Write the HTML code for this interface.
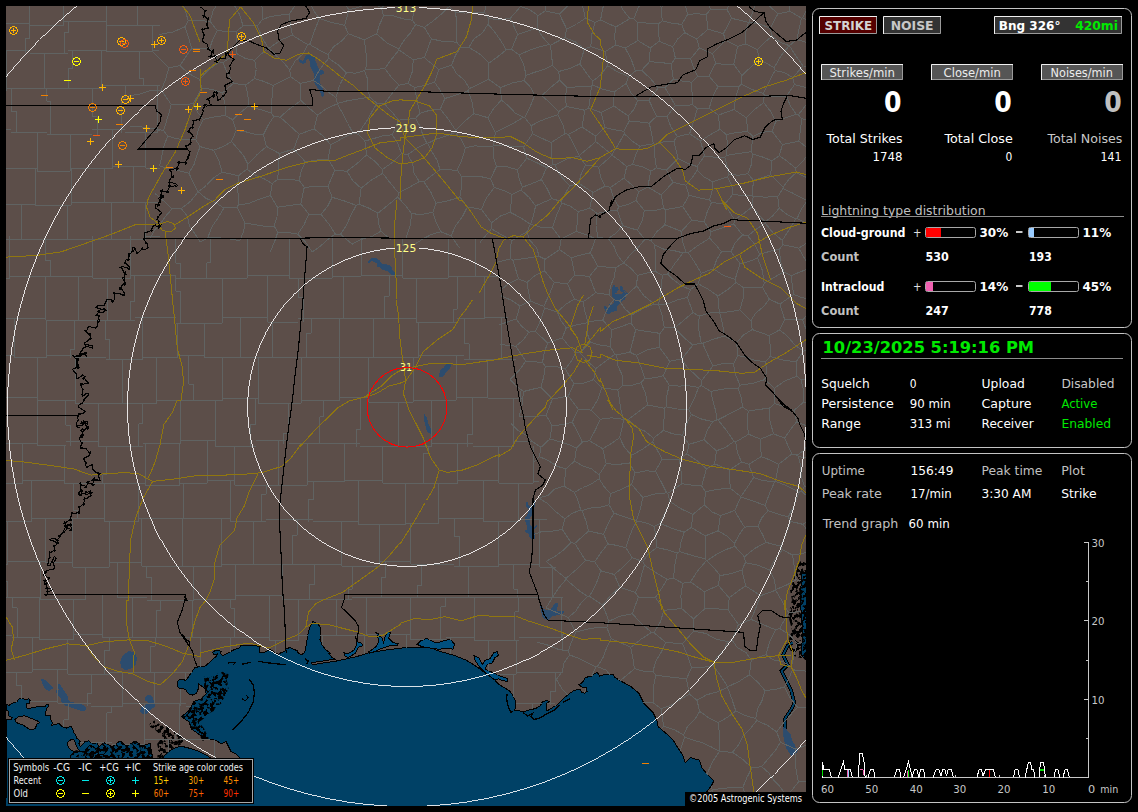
<!DOCTYPE html>
<html><head><meta charset="utf-8"><title>Lightning Detector</title>
<style>html,body{margin:0;padding:0;background:#000;overflow:hidden}svg{display:block}</style>
</head><body>
<svg width="1138" height="812" viewBox="0 0 1138 812">
<rect width="1138" height="812" fill="#000"/>
<!-- MAP -->
<svg x="6" y="6" width="800" height="800" viewBox="6 6 800 800" overflow="hidden" shape-rendering="crispEdges">
<defs><filter id="mf" x="0" y="0" width="100%" height="100%"><feTurbulence type="fractalNoise" baseFrequency="0.27" numOctaves="2" seed="5"/><feColorMatrix values="0 0 0 0 0 0 0 0 0 0 0 0 0 0 0 0 0 0 -18 9.4"/></filter><clipPath id="mc"><path d="M203.9 676.6L208.8 677.9L216.2 674.2L222.3 671.7L228.5 674.2L227.3 681.6L228.5 688.9L224.8 696.3L221.1 703.7L216.2 706.2L213.7 711.1L208.8 713.6L203.9 718.5L198.9 722.2L203.9 728.3L208.8 738.2L203.9 743.1L198.9 734.5L191.6 729.6L189.1 722.2L181.7 717.3L187.9 713.6L187.9 709.9L192.8 706.2L192.8 701.3L198.9 703.7L202.6 696.3L206.3 691.4L203.9 686.5L204.5 681.6Z M149.7 723.1L154.6 720.6L159.5 724.3L166.9 726.8L171.9 729.2L179.2 734.2L184.2 739.1L181.7 744L176.8 746.5L171.9 748.9L166.9 753.9L162 758.8L157.1 758.8L158.3 748.9L157.1 744L160.8 739.1L159.5 734.2L154.6 729.2L149.7 726.8Z M800 560L795 575L790 590L792 600L788 615L792 630L787 645L794 656L807 660L807 560Z M70 756L76 750L84 752L90 745L97 749L104 742L112 747L120 741L127 746L135 741L143 746L150 743L153 760L70 760Z"/></clipPath></defs>
<rect x="6" y="6" width="800" height="800" fill="#5c4e49"/>
<path d="M6.2 704.6L9.2 705.2L12.3 703.4L17.2 701.5L18.5 699.1L22.2 698.5L25.9 699.7L28.9 698.5L30.2 700.9L29.5 703.4L26.5 704L26.5 707.7L27.7 708.9L32 707.7L39.4 706.5L45.5 706.5L46.2 704L48.3 704.6L48.6 706.5L47.4 707.7L46.2 709.5L45.5 715.1L48.6 715.1L50.5 715.7L51.1 720.6L52.3 722.5L51.7 725.5L54.8 724.3L59.1 723.7L60.9 725.5L62.8 726.8L66.5 728L69.6 726.8L71.4 726.8L72.6 729.2L73.9 732.9L75.7 734.8L76.3 737.9L78.8 739.7L80 741.6L78.8 744L80.6 746.5L84.9 741.6L88.6 740.9L91.1 742.8L93.6 743.4L97.3 742.8L98.5 746.5L97.3 748.9L102.2 749.6L105.9 751.4L104.6 753.9L102.2 755.1L98.5 753.9L96 756.3L93.6 758.8L93.6 803.1L6.2 803.1Z M240.8 806.8L239.6 757.8L235.9 753.9L230.9 751.4L228.5 746.5L226 741.6L221.1 744L216.2 740.3L208.8 739.1L203.9 737.9L198.9 734.2L191.6 729.2L189.1 721.9L181.7 716.9L189.1 709.9L194 701.3L201.4 698.8L206.3 693.9L205.1 688.9L198.9 684L198.3 688.9L196.5 693.2L192.8 695.1L188.5 693.9L186 690.2L183.6 688.7L179.9 688.9L177.4 686.5L177 682.2L179.2 680L182.9 679.7L186 680.3L189.1 676L192.8 670.5L195.2 667.4L198.9 666.8L203.9 667L208.8 663.1L212.5 659.4L216.2 656.3L217.4 653.9L213.7 654.5L212.7 652.3L214.9 650.8L218 650.5L221.1 651.4L220.5 653.2L222.3 655.7L228.5 652.6L234.6 649.5L239.6 647.7L240.8 645.9L253.1 645.2L260 646.5L259.1 652.5L262.8 652.8L266.5 651.2L270.2 649.4L273.9 651.9L278.8 654.3L281.3 652.5L284.9 651.2L286.2 648.8L289.9 647.5L293.6 649.4L297.3 650.6L298.5 653.7L302.2 654.3L304.6 652.5L305.9 646.9L307.1 639.5L308.3 632.2L310.2 626L312.6 621.7L315.1 622.3L318.2 624.2L320 627.2L320.6 633.4L320 639.5L322.5 645.7L325.6 649.4L330 653.1L328.3 653.1L332 657.4L335.1 659.2L336.9 661L346.8 658.8L355.4 656.9L364 654.4L368.9 652.8L376.3 651.6L386.2 650L396 648.7L404.6 647.7L413.3 647.1L423.1 647.5L430 646.9L436.9 650.5L454.2 655.4L466.5 660.3L476.4 666.5L485 672.7L493.6 678.8L499.1 684.6L504.9 688L508.8 690.3L512.3 694.3L515.1 700L515.7 705.7L514.6 710.8L519.7 710.8L523.1 712L527.7 710.3L535.7 708.5L540.3 705.7L542.5 701.7L547.1 700.6L549.4 701.7L546.5 703.4L546 708L547.1 710.8L551.7 708L557.4 704.6L563.1 698.8L570 693.1L574.5 690.3L580.2 689.1L581.4 692L584.8 693.1L587.1 691.4L586.5 688L581.4 686.8L579.1 684.6L582.5 682.3L584.8 678.3L588.2 676.6L591.7 676L594 673.7L597.4 672.6L599.7 676L603.1 674.9L608.8 674.3L612.8 674.3L614.5 677.1L620 680.6L631 686.6L638.8 693.1L644 703.4L653 712.5L656.9 720.2L658.2 726.7L665.9 733.2L673.7 740.9L677.6 747.4L682.8 755.2L685.3 762.9L690.5 757.7L699.6 760.3L702.1 768.1L708.6 775.8L713.8 781L711.2 786.2L706 792.7L704.7 806.9Z M162 758.8L166.9 752.6L173.1 748.9L179.2 746.5L185.4 747.1L191.6 748.9L198.9 751.4L206.3 755.1L216.2 761.3L216.2 803.1L154.6 803.1Z M802 572L806 572L806 660L801 655L803 630L800 600Z M70 756L76 750L84 752L90 745L97 749L104 742L112 747L120 741L127 746L135 741L143 746L150 743L153 760L70 760Z" fill="#004166" stroke="#000" stroke-width="1"/>
<path d="M355.4 636.5L357.9 642L361.6 643.2L362.8 645.7L359.1 646.9L357.2 649.4L355.4 653.1L351.7 655.5L348.6 657.4L345.5 656.8L343.7 652.5L347.4 653.7L351.1 651.9L354.2 650L356 645.7L356.9 642.6Z M375.7 632.2L378.8 634L380 636.5L381.9 637.7L383.7 642.6L384.9 637.1L386.8 633.4L388.6 631.5L390.5 632.8L388.6 638.3L392.9 642.6L398.5 643.5L397.3 645.1L391.1 645.3L386.2 646.9L380 649.1L375.1 651.4L369.6 653.1L368.3 652.2L372.6 649.4L376.3 646.3L378.8 642L377.6 636.5Z M417.2 644.3L420.9 640.6L427.1 638.2L430.8 640.6L436.9 643.1L444.3 640.6L450.5 639.4L454.7 644.3L453 649.3L446.8 648L439.4 649.3L429.6 648L422.2 646.8Z M473.9 655.4L478.8 657.9L482.5 664.5L485 660.3L489.9 658.6L493.6 653L497.3 651.7L498.5 655.4L494.8 657.9L492.4 662.8L487.4 664.5L485 669L489.9 671.4L496.1 673.9L501 676.4L507.1 678.3L507.9 681.3L502.2 680.8L498.5 678.8L494.8 680L488.7 675.1L483.7 671.4L478.8 666L475.1 660.3Z" fill="#00507f" stroke="#000" stroke-width="1"/>
<path d="M14.8 719.4L18.5 716.9L24.6 715.7L30.8 718.2L36.9 720.6L39.4 722.5L36.9 724.3L35.1 728.6L30.8 729.9L26.5 727.4L22.8 724.9L18.5 723.7L16 721.9Z M4.9 709.5L8 710.8L8.6 715.7L12.3 717.5L11.1 719.4L4.9 720Z M67.1 742.8L71.4 739.1L73.9 739.7L75.7 744L77.6 748.9L80 750.8L76.3 752.6L71.4 750.2L68.3 747.1Z M311.7 662.9L318.5 661.6L324.6 660.8L335.1 659L336.9 661L324.6 662.8L312.3 664.7Z" fill="#5c4e49" stroke="#000" stroke-width="1"/>
<g clip-path="url(#mc)"><rect x="65" y="660" width="195" height="150" filter="url(#mf)"/><rect x="780" y="555" width="30" height="110" filter="url(#mf)"/></g>
<path d="M792.7 642.3L787.9 645.5L783.1 655.1L787.9 664.6L781.5 671L786.3 680.6L791.1 690.2L794.3 703L791.1 709.4L784.7 719L784.7 728.6" fill="none" stroke="#000" stroke-width="3.6"/><path d="M792.7 642.3L787.9 645.5L783.1 655.1L787.9 664.6L781.5 671L786.3 680.6L791.1 690.2L794.3 703L791.1 709.4L784.7 719L784.7 728.6" fill="none" stroke="#004166" stroke-width="1.8"/>
<path d="M42.5 680L45.5 681.2L49.2 684.9L51.7 688L49.2 689.8L45.5 688L43.7 684.3Z M59.1 684.9L61.6 688.6L64 692.3L66.5 696L66.5 700.3L70.2 702.8L76.3 704L81.3 705.2L84.9 707.7L84.3 710.2L80 709.5L75.1 707.7L70.2 705.9L65.2 704.6L62.2 700.9L61.6 697.2L57.9 693.5L57.2 691.1L60.3 691.7L59.1 687.4Z" fill="#2c4c6e" stroke="#2c4c6e" stroke-width="2.2" stroke-linejoin="round"/>
<path d="M122.7 656.2L128.1 651.7L134.7 652.5L136.9 657.9L135.5 663.5L131 668L125.6 670L121.4 667L120.7 661.6Z M144.8 697.6L148.5 695.1L152.2 696.9L152.8 700L154.6 702.5L154.6 706.2L150.9 709.3L147.2 712.9L143.5 714.2L140.5 711.1L141.7 707.4L146 704.9L149.1 701.9L145.4 700Z M299.1 59.4L300.3 60.7L302.9 61.1L304.7 58.5L305.9 55.9L308.5 55.1L311.6 56.8L314.6 57.7L315 60.7L316.7 65L318.9 70.2L321.9 70.2L323.6 71.9L323.2 73.6L319.7 74.5L319.3 77.9L319.7 83.1L321.9 87.4L323.2 90.9L323.6 95.2L322.3 96.9L320.6 91.7L317.6 87.4L315 83.1L314.1 77.9L314.6 74.5L312.4 70.2L310.7 66.7L310.3 61.6L308.5 58.1L306.4 59L305.5 62L302.9 63.7L300.3 62.4Z M367.9 261.8L369.4 260.3L371.3 259.1L373.3 258.1L375.3 258.1L377.7 259.4L379.7 261.1L381.2 263.3L382.7 264.3L386.6 265L389.6 266L391 267.2L391 269.2L393 271.2L395 272.7L396.5 275.6L396.7 276.8L395 276.8L393.5 275.6L391.5 274.1L389.6 272.7L387.6 270.7L385.6 270.2L383.2 269.2L381.2 268.7L380.7 267.2L377.2 266.3L377 265L378.2 264.3L376.3 262.8L374.3 261.6L372.3 260.6L370.6 261.1L369.4 262.8L368.1 262.8Z M440.6 370L444.3 367.5L446.8 363.8L450.5 365L449.3 368.7L445.6 372.4L443.1 376.1L439.4 376.8Z M612.2 288.5L613.7 285.2L614.8 285.9L615.1 287.7L617.3 287.4L618.5 289.6L616.6 290.7L616.2 292.5L614.8 292.9L614.4 294.4L619.6 294.8L622.5 294.4L623.6 292.2L620.3 290.7L620.3 286.6L621.8 286.3L622.5 290L625.5 292.9L627.7 293.3L625.8 295.9L624.7 298.5L622.5 299.9L621 301.8L618.8 304L616.6 306.2L616.2 308.4L616.6 310.3L614.4 311L612.2 311.4L610 313.2L607.4 313.6L606.3 311L604.4 308.1L604.4 306.2L606.3 307L607.7 308.4L609.6 307.7L609.2 304.4L611.4 305.5L614 303.6L614.4 301L615.5 299.2L612.5 297.3L612.2 293.7Z M526.1 502.2L527.6 502.7L528.1 505.6L530.5 507.6L532 504.6L532.5 501.2L534 501.2L534 506.6L532.5 509.6L531.5 513.5L529.6 517.4L529.1 522.4L530.5 526.3L533.5 527.3L536.5 525.3L536.9 526.3L534 529.3L532.5 531.2L535 533.7L534.5 538.1L532 539.1L529.6 537.1L529.1 533.7L525.1 531.2L527.6 529.8L527.1 525.3L525.6 520.4L525.1 517.4L526.6 516.9L528.1 512.5L529.6 509.6L526.6 506.6Z M424.1 413.5L426.6 417.2L427.6 423.4L430 428.3L432 429.6L430.8 434L427.6 431.5L425.9 425.9L424.6 419.7Z M540.4 602.5L544.1 609.9L550.2 611.1L555.2 603.7L557.6 603.7L556.4 611.1L563.8 611.1L562.6 614.3L552.7 615.3L547.8 619.7L542.9 617.2L541.6 611.1Z M784.9 728L790.1 734.5L793.9 744.8L796.5 752.6L791.4 755.2L786.2 747.4L784.1 737.1Z M783.5 727L787.9 735L794.3 744.5L797.5 750.9L791.1 754.8L786.3 746.1L783.5 735.6Z" fill="#2c4c6e" stroke="#2c4c6e" stroke-width="0.9"/>
<path d="M626.9 806.9L625.7 817.7M625.7 817.7L622.9 830.8M648.5 806.9L650.3 815.8M650.3 815.8L655.5 827M511.1 423.6L518 430.3M518 430.3L526.2 435.3M526.2 435.3L533 442.1M533 442.1L541 447.3M519.4 416.1L532.8 416.7M532.8 416.7L546.1 415.2M541 447.3L549.8 439M549.8 439L552.1 425.7M546.1 415.2L552.1 425.7M523.6 147L532.4 133.6M523.6 147L526.8 158.3M532.4 133.6L541.7 138.2M541.7 138.2L551.1 142.6M546.5 167.5L536.8 162.6M536.8 162.6L526.8 158.3M546.5 167.5L552.9 164.5M552.9 164.5L551.4 153.6M551.4 153.6L551.1 142.6M557.7 114.8L562.6 123.7M562.6 123.7L565.2 133.5M557.7 114.8L548.6 117.7M548.6 117.7L539.7 121.2M539.7 121.2L531.2 125.7M531.2 125.7L532.4 133.6M551.1 142.6L565.2 133.5M746.9 -3L730.4 1.3M730.4 1.3L724.2 -14.6M706.1 14.6L710.5 9.6M706.1 14.6L696.9 13.7M696.9 13.7L687.6 14.4M710.5 9.6L704.8 -5.3M687.6 14.4L685.2 4.3M685.2 4.3L694.7 -7.9M730.4 1.3L727.1 9.6M727.1 9.6L710.5 9.6M795.8 749.1L804.9 745.8M804.9 745.8L814.5 745.2M814.5 745.2L823.8 743.4M795.8 749.1L795.2 760.2M795.2 760.2L796.2 771.2M796.2 771.2L798.4 782.1M824.5 777.3L811.7 780.9M811.7 780.9L798.4 782.1M780.5 742.3L775 751M775 751L768.3 758.7M768.3 758.7L761.7 766.6M780.5 742.3L795.8 749.1M761.7 766.6L768.6 772.7M768.6 772.7L773.8 780.2M773.8 780.2L780.1 786.8M780.1 786.8L785.5 794.1M785.5 794.1L789.3 793.4M789.3 793.4L798.4 782.1M789.3 793.4L797.4 798.7M797.4 798.7L804 805.8M804 805.8L810.8 812.7M810.8 812.7L818.9 817.9M785.5 794.1L784.2 795.6M784.2 795.6L782.2 804.7M782.2 804.7L782.2 814.1M782.2 814.1L780.4 823.2M780.4 823.2L778.4 832.2M596.4 806.9L591.4 812.5M562.7 828.1L571.2 820.2M571.2 820.2L577.8 810.7M577.8 810.7L591.4 812.5M577.8 810.7L576.1 806.9M722.1 816.8L718.9 807.9M718.9 807.9L714.3 799.6M714.3 799.6L712.5 790.2M722.1 816.8L731.2 816.1M731.2 816.1L740 813.5M740 813.5L749 811.9M742.8 787.3L746.3 797M746.3 797L751.2 806.1M742.8 787.3L732.7 787.9M732.7 787.9L722.5 788.1M722.5 788.1L712.5 790.2M712.5 790.2L712.5 790.2M749 811.9L751.2 806.1M684.1 818.8L684.3 807.5M684.3 807.5L685.2 806.9M705.9 793.5L712.5 790.2M757.7 832.9L753.7 822.3M753.7 822.3L749 811.9M761.7 766.6L751.9 767.9M751.9 767.9L747 777.4M747 777.4L742.8 787.3M784.2 795.6L773.5 800.3M773.5 800.3L761.9 801.7M761.9 801.7L751.2 806.1M732.5 752.3L719.5 751.4M732.5 752.3L742.8 759.4M742.8 759.4L751.9 767.9M707.3 773.4L712.5 761.9M712.5 761.9L719.4 751.4M707.3 773.4L707.7 774.7M711.2 786.1L712.5 790.2M719.5 751.4L719.4 751.4M760.6 595.7L745.7 586M760.6 595.7L775.7 590.2M775.7 590.2L776 589.5M776 589.5L774.3 579.3M774.3 579.3L769.6 570M769.6 570L757.8 565.2M757.8 565.2L745.4 562.6M745.7 586L741.9 570M741.9 570L745.4 562.6M782.4 549.8L774.9 559.2M774.9 559.2L769.6 570M782.4 549.8L780.6 546.2M780.6 546.2L766.2 542.4M744.4 556.8L754.6 548.5M754.6 548.5L766.2 542.4M744.4 556.8L745.4 562.6M808 708L813.1 699M813.1 699L818.9 690.4M818.9 690.4L824.6 681.8M808 708L815.1 714.8M815.1 714.8L821 722.8M821 722.8L829 728.7M784.5 686.9L790.1 697.7M790.1 697.7L797.5 707.3M784.5 686.9L774.9 689.6M774.9 689.6L764.9 690.4M764.9 690.4L762.3 699.9M762.3 699.9L757.8 708.8M757.8 708.8L755.6 718.4M797.5 707.3L790.3 715.2M790.3 715.2L783.1 723.3M783.1 723.3L776.7 731.9M776.7 731.9L767.3 725.2M767.3 725.2L756.7 720.5M756.7 720.5L755.6 718.4M749.4 674.8L738.9 681.5M738.9 681.5L727.7 686.8M749.4 674.8L757.7 682.1M757.7 682.1L764.9 690.4M735.9 711.1L745.4 715.7M745.4 715.7L755.6 718.4M735.9 711.1L731.9 699.1M731.9 699.1L727.5 687.3M727.5 687.3L727.7 686.8M780.5 742.3L776.7 731.9M808 708L797.5 707.3M732.5 752.3L738.8 744.5M738.8 744.5L743.4 735.5M743.4 735.5L750.6 728.4M750.6 728.4L756.7 720.5M735.9 711.1L727.4 717.3M727.4 717.3L718.2 722.6M718.2 722.6L719.2 732.1M719.2 732.1L719.8 741.7M719.8 741.7L719.5 751.4M567.6 695L562.4 689.4M562.4 689.4L556.3 679.3M568.3 617.5L557.2 612.7M557.2 612.7L546 607.9M568.3 617.5L575.6 611.3M575.6 611.3L580.9 603.3M580.9 603.3L587.5 596.3M546 607.9L552.2 598M552.2 598L558.5 588.1M558.5 588.1L566.1 579.3M566.1 579.3L572.9 585.3M572.9 585.3L579.9 591.2M579.9 591.2L587.5 596.3M564.2 486.2L555.1 488.7M555.1 488.7L547.9 495.4M547.9 495.4L538.8 497.9M564.2 486.2L565.7 469M565.7 469L556.4 466M556.4 466L548.3 460.5M548.3 460.5L539.4 456.6M539.4 456.6L534.3 461.9M523.5 391.5L522.2 403.9M522.2 403.9L519.4 416.1M523.5 391.5L540.9 387.2M546.1 415.2L552.4 399M552.4 399L540.9 387.2M552.4 399L568.3 396M540.9 387.2L543.7 377M543.7 377L545.3 366.5M565.4 369.1L555.5 366.3M555.5 366.3L545.3 366.5M565.4 369.1L573.8 383.7M573.8 383.7L568.3 396M565.7 469L574.6 461.1M539.4 456.6L541 447.3M549.8 439L558.9 441.4M558.9 441.4L567.9 444.2M567.9 444.2L576.5 448.1M576.5 448.1L574.6 461.1M564.2 486.2L574.4 492.3M574.4 492.3L582.6 487.7M582.6 487.7L591.4 484M591.4 484L599.2 478.7M599.2 478.7L599 474.8M574.6 461.1L582.7 465.8M582.7 465.8L591.6 468.9M591.6 468.9L599 474.8M243.1 25.9L257.3 25.9M243.1 25.9L239.4 14.3M239.4 14.3L233.5 3.7M233.5 3.7L245.2 -7.3M262.2 19.6L257.3 25.9M262.2 19.6L262.5 8.7M262.5 8.7L259.7 -1.9M512 194.5L503.4 190.4M503.4 190.4L494.3 187.6M512 194.5L521.1 190M521.1 190L522.5 187.2M522.5 187.2L519.1 178.8M519.1 178.8L517.5 169.8M517.5 169.8L507.2 166.8M507.2 166.8L496.5 166.4M494.3 187.6L490.6 178.7M496.5 166.4L490.6 178.7M546.5 167.5L541.5 179.6M526.8 158.3L517.5 169.8M541.5 179.6L532 183.5M532 183.5L522.5 187.2M493 146.3L493.2 156.6M493.2 156.6L496.5 166.4M493 146.3L493.8 145.4M493.8 145.4L503.8 144.9M503.8 144.9L513.6 146.7M513.6 146.7L523.6 147M405.9 238.5L409.9 226.4M409.9 226.4L411.9 213.8M411.9 213.8L422.4 214.4M422.4 214.4L432.8 212.3M432.8 212.3L436 222.3M436 222.3L440.8 231.7M415.6 243.7L423.4 238.6M423.4 238.6L431.7 234.3M431.7 234.3L440.8 231.7M380.9 231.2L390.8 239.9M380.9 231.2L371.8 236.5M371.8 236.5L361.4 239.3M361.4 239.3L352.1 244.2M585.4 18.3L576.4 24.3M576.4 24.3L566.7 29.1M585.4 18.3L582.6 6.2M582.6 6.2L576.9 -4.8M559.4 14L568.5 5.1M568.5 5.1L575.5 -5.5M559.4 14L566.7 29.1M558.8 111.5L566.4 106.4M558.8 111.5L550.5 103.3M550.5 103.3L541.8 95.7M541.8 95.7L550.5 87.6M550.5 87.6L559.7 80.1M559.7 80.1L567.1 87.8M567.1 87.8L565.2 97.1M565.2 97.1L566.4 106.4M584.4 49L579.9 63.9M584.4 49L590.8 46.7M590.8 46.7L605.4 51.5M579.9 63.9L586.2 72.7M586.2 72.7L592.7 81.2M592.7 81.2L601.2 74.5M601.2 74.5L607.5 65.7M605.4 51.5L607.5 65.7M564.9 37.6L575.4 42M575.4 42L584.4 49M564.9 37.6L566.7 29.1M585.4 18.3L595 22.3M595 22.3L591.8 34.3M591.8 34.3L590.8 46.7M558.7 71.5L569.6 68.5M569.6 68.5L579.9 63.9M558.7 71.5L559.7 80.1M591.4 86.1L579.2 86.6M579.2 86.6L567.1 87.8M591.4 86.1L592.5 84.8M592.5 84.8L592.7 81.2M615.6 45L605.4 51.5M615.6 45L625.2 48.1M635.3 71.1L631.2 59.2M631.2 59.2L625.2 48.1M635.3 71.1L628.5 76.6M628.5 76.6L617.6 71.8M617.6 71.8L607.5 65.7M578.1 211.7L577.4 221.6M577.4 221.6L576.2 231.4M578.1 211.7L589.9 208.1M589.9 208.1L596.9 213.4M596.9 213.4L596 225.5M596 225.5L597.9 237.5M576.2 231.4L586 234.6M586 234.6L595.5 238.8M595.5 238.8L597.9 237.5M746.9 -3L755 5.5M755 5.5L749 22M731.5 18.3L727.1 9.6M731.5 18.3L748.4 22.3M748.4 22.3L749 22M671 -1.5L685.2 4.3M671 -1.5L661.7 7.3M687.6 14.4L681.8 24.4M681.8 24.4L671.8 23.2M671.8 23.2L662.1 20.8M661.7 7.3L662.1 20.8M715.7 63.1L712.4 53.6M715.7 63.1L724.7 64.6M724.7 64.6L733.7 64.2M733.7 64.2L735.8 55.4M735.8 55.4L737.6 46.4M737.6 46.4L725.4 40M712.4 53.6L719.1 47M719.1 47L725.4 40M731.5 18.3L723.4 33.6M706.1 14.6L708.1 29.3M708.1 29.3L723.4 33.6M737.6 46.4L745.4 43.9M748.4 22.3L745.5 32.9M745.5 32.9L745.4 43.9M725.4 40L723.4 33.6M380.9 231.2L378.1 222.4M378.1 222.4L377.9 213.2M411.9 213.8L405.1 205.1M405.1 205.1L397.7 197M377.9 213.2L387.9 205.2M387.9 205.2L397.7 197M729.2 597.9L718.3 585.3M729.2 597.9L737.2 591.6M737.2 591.6L745.7 586M741.9 570L731.2 573.7M731.2 573.7L720.1 575.6M720.1 575.6L718.3 585.3M751.2 619.4L738.4 624.5M751.2 619.4L756 607.6M756 607.6L760.6 595.7M729.2 597.9L728.1 610M738.4 624.5L728.1 610M704.3 591.8L718.3 585.3M704.3 591.8L704.5 609M728.1 610L716.3 608.7M716.3 608.7L704.5 609M682.7 583.3L690.5 581.9M682.7 583.3L680.9 595.8M680.9 595.8L681.6 608.5M681.6 608.5L693.5 618.8M690.5 581.9L704.3 591.8M693.5 618.8L704.5 609M682.7 583.3L673.5 578.1M681.6 608.5L663.9 610.3M663.9 610.3L655.5 597.4M655.5 597.4L661.5 588.5M661.5 588.5L667.2 579.4M673.5 578.1L667.2 579.4M679.3 551.6L681.1 541.7M681.1 541.7L684.1 532.2M679.3 551.6L677.3 552.9M654.3 526.5L655.9 537M655.9 537L656.7 547.5M654.3 526.5L660.1 523.4M677.3 552.9L667.1 549.8M667.1 549.8L656.7 547.5M660.1 523.4L671.9 528.2M671.9 528.2L684.1 532.2M744.4 556.8L734.9 546.5M720.1 575.6L714 567.8M714 567.8L707 560.8M734.9 546.5L724.9 549.9M724.9 549.9L715.7 554.9M715.7 554.9L707 560.8M679.3 551.6L692.2 555.4M692.2 555.4L705.2 559M691.3 527.4L684.1 532.2M691.3 527.4L705.3 535.9M705.3 535.9L705.5 547.4M705.5 547.4L705.2 559M690.5 581.9L697.7 570.7M697.7 570.7L706.4 560.6M677.3 552.9L674.8 565.4M674.8 565.4L673.5 578.1M705.2 559L706.4 560.6M706.4 560.6L707 560.8M815.6 541.3L809.1 533M809.1 533L803.1 524.4M822.5 510.1L812.4 516.8M812.4 516.8L803.1 524.4M780.6 546.2L786.1 534M786.1 534L790.6 521.3M766.2 542.4L762.3 534.1M762.3 534.1L757.9 526M757.9 526L761.9 517.7M761.9 517.7L768 510.7M768 510.7L778 514.1M778 514.1L788.2 517M790.6 521.3L788.2 517M765.2 505.4L769.5 493.3M769.5 493.3L774.8 481.6M765.2 505.4L753.1 501.1M753.1 501.1L740.9 496.9M740.9 496.9L740.8 496.6M740.8 496.6L747.4 487.2M747.4 487.2L753.6 477.7M753.6 477.7L764 480.8M764 480.8L774.8 481.6M768 510.7L765.2 505.4M788.2 517L794.4 505M794.4 505L798.9 492.3M798.9 492.3L787.4 486M787.4 486L775.3 481.3M775.3 481.3L774.8 481.6M748.8 464.4L753.6 477.7M748.8 464.4L761.2 456.6M761.2 456.6L770.2 460M770.2 460L778.8 464.2M775.3 481.3L778.8 464.2M584.3 692.9L584.8 691.9M584.8 691.9L586.1 687.9M591.9 675.8L592.2 675.2M592.2 675.2L596 667M556.3 679.3L562.1 671.9M562.1 671.9L564.2 662.5M564.2 662.5L569.7 654.9M596 667L587.4 662.6M587.4 662.6L578.7 658.4M578.7 658.4L569.7 654.9M568.3 617.5L575.7 632.1M536.7 642.2L547.3 644.9M547.3 644.9L557.5 649M557.5 649L568.3 651M575.7 632.1L571.7 641.4M571.7 641.4L568.3 651M684.3 807.5L683.8 806.9M707.3 773.4L706.4 773.2M684.5 737.1L693.5 740.1M693.5 740.1L702.5 742.9M702.5 742.9L711.1 746.8M711.1 746.8L719.4 751.4M684.5 737.1L680.6 749M680.6 749L680 751M661.1 708.8L663.7 726.2M661.1 708.8L671.2 705.2M671.2 705.2L680.3 699.5M680.3 699.5L689.5 694.2M663.7 726.2L674 729.6M674 729.6L683.5 734.8M683.5 734.8L687.7 726.2M687.7 726.2L694.7 719.5M694.7 719.5L699.7 711.4M699.7 711.4L697 700.3M697 700.3L689.5 694.2M653.1 702.7L661.1 708.8M653.1 702.7L644 702.1M644 702.1L643.4 702.2M661 729L663.7 726.2M655.8 675.1L666 676.6M666 676.6L676.2 677.7M676.2 677.7L686.4 679M655.8 675.1L654 684.3M654 684.3L653.8 693.5M653.8 693.5L653.1 702.7M686.4 679L689.5 694.2M684.5 737.1L683.5 734.8M718.2 722.6L708.5 717.6M708.5 717.6L699.7 711.4M727.5 687.3L717.4 691.8M717.4 691.8L706.7 694.8M706.7 694.8L697 700.3M796.1 579.7L801.3 581.2M806 582.5L810.7 583.8M796.1 579.7L794.4 567.4M794.4 567.4L792.6 555.1M792.6 555.1L803.7 553.1M803.7 553.1L814.6 550.4M813.9 580.5L810.7 583.8M782.4 549.8L792.6 555.1M776 589.5L786.3 585.2M786.3 585.2L796.1 579.7M803.1 524.4L790.6 521.3M812.2 591L810.7 583.8M566.1 579.3L566 578.3M546.4 561.2L555.8 570.3M555.8 570.3L566 578.3M663.9 610.3L660.3 622.1M660.3 622.1L653.9 632.6M655.5 597.4L638.3 597M653.9 632.6L651.5 632.4M651.5 632.4L641.4 623.7M641.4 623.7L632.4 613.8M638.3 597L632.4 613.8M569.7 654.9L568.3 651M823.7 52.5L817.7 60.1M817.7 60.1L810.2 66.2M810.2 66.2L817.3 76.6M817.3 76.6L821.9 88.3M763.5 93.4L752.3 89.6M752.3 89.6L741.8 84.2M763.5 93.4L764.2 94.8M739.2 86L741.8 84.2M739.2 86L735.7 97.5M735.7 97.5L734 109.5M734 109.5L746.2 117.7M746.2 117.7L754.4 109.6M754.4 109.6L763.7 102.6M764.2 94.8L763.7 102.6M636.6 520.6L625.2 517.1M625.2 517.1L613.9 513.1M636.6 520.6L640.4 509.1M640.4 509.1L642.8 497.4M610.5 493.7L608.9 504.7M610.5 493.7L621.2 489.5M621.2 489.5L631.6 484.5M631.6 484.5L642.8 497.4M613.9 513.1L608.9 504.7M636.9 521L632.3 529.5M632.3 529.5L628.8 538.5M628.8 538.5L625.9 547.7M636.9 521L636.6 520.6M625.9 547.7L616.9 545.4M616.9 545.4L607.9 543.9M607.9 543.9L603.6 534.3M613.9 513.1L608.2 523.4M608.2 523.4L603.6 534.3M572.2 422.1L578.4 409.4M572.2 422.1L577.6 432M577.6 432L582.3 442.1M578.4 409.4L591.4 410.1M582.3 442.1L589.5 440.8M589.5 440.8L595.2 430.2M595.2 430.2L600.3 419.2M600.3 419.2L591.4 410.1M552.1 425.7L562.3 424.7M562.3 424.7L572.2 422.1M568.3 396L578.4 409.4M576.5 448.1L582.3 442.1M601.6 387.8L593.7 379.6M601.6 387.8L597.8 399.6M597.8 399.6L591.4 410.1M593.7 379.6L584 383M584 383L573.8 383.7M602.8 448.8L589.5 440.8M602.8 448.8L606.2 463.8M599 474.8L606.2 463.8M704.1 439.8L707.3 430.2M707.3 430.2L712.7 421.7M704.1 439.8L689 444.4M682.6 435.3L689 444.4M682.6 435.3L686.4 424.7M686.4 424.7L691.3 414.5M691.3 414.5L701.7 419.1M701.7 419.1L712.7 421.7M640.9 382.6L645.6 393.4M645.6 393.4L647.5 405M640.9 382.6L632 385.4M632 385.4L622.7 385.4M617.9 390L622.7 385.4M617.9 390L619.4 399.9M619.4 399.9L620.9 409.7M620.9 409.7L623.5 419.4M647.5 405L637.8 412.4M637.8 412.4L627.9 419.6M627.9 419.6L623.7 419.5M623.5 419.4L623.7 419.5M601.6 387.8L617.9 390M600.3 419.2L611.9 417.8M611.9 417.8L623.5 419.4M664.4 408.2L647.5 405M664.4 408.2L664 419.3M664 419.3L663.4 430.4M653.4 438.3L663.4 430.4M653.4 438.3L645.4 431.4M645.4 431.4L635.6 426.9M635.6 426.9L627.9 419.6M619.7 437.6L621.9 428.6M621.9 428.6L623.7 419.5M619.7 437.6L611.4 443.4M611.4 443.4L602.8 448.8M669.2 385.2L666.8 395.9M666.8 395.9L666 406.8M669.2 385.2L678.9 386.1M678.9 386.1L688.8 385.7M688.8 385.7L698.5 387.5M666 406.8L677.2 409M677.2 409L688.7 409.5M698.5 387.5L694.3 398.8M694.3 398.8L688.7 409.5M664.4 408.2L666 406.8M644.9 378.3L654.3 377.9M654.3 377.9L663.3 375.6M644.9 378.3L640.9 382.6M663.3 375.6L669.2 385.2M663.4 430.4L672.7 433.8M672.7 433.8L682.6 435.3M691.3 414.5L688.7 409.5M376.9 103.3L372.3 111M372.3 111L368 119M368 119L362.9 126.5M362.9 126.5L358.1 134.2M376.9 103.3L369.9 97.2M358.1 134.2L353.1 133.2M337.4 103.4L348.1 100.6M348.1 100.6L359 98.8M359 98.8L369.9 97.2M337.4 103.4L337.2 103.8M353.1 133.2L347.7 123.4M347.7 123.4L342.8 113.5M342.8 113.5L337.2 103.8M262.2 19.6L270.9 16.4M270.9 16.4L279.9 15.1M279.9 15.1L289 14.4M289 14.4L296 3.9M281.1 -15.3L287.8 -5.1M287.8 -5.1L296 3.9M292.4 35.1L300 40M300 40L307.7 44.6M292.4 35.1L280.1 40.4M280.1 40.4L269.2 48.2M307.7 44.6L302.9 54M302.9 54L295 61.2M295 61.2L289.8 70.2M289.8 70.2L283.6 62.3M283.6 62.3L276.1 55.5M276.1 55.5L269.2 48.2M243.1 25.9L236.1 31.6M257.3 25.9L262 37.4M262 37.4L268.4 48M236.1 31.6L237.1 42.5M237.1 42.5L236.5 53.5M236.5 53.5L245.1 58.4M245.1 58.4L254.8 60.4M254.8 60.4L261.4 53.9M261.4 53.9L268.4 48M289 14.4L290.4 24.8M290.4 24.8L292.4 35.1M269.2 48.2L268.4 48M535.6 205.8L552 198.7M535.6 205.8L533.6 215.1M533.6 215.1L530.5 224.2M530.5 224.2L541.2 227.3M541.2 227.3L552.4 227.6M552.4 227.6L556.7 215.1M556.7 215.1L561.8 203M552 198.7L561 201.3M561 201.3L561.8 203M541.5 179.6L547.2 188.9M547.2 188.9L552 198.7M521.1 190L529 197.2M529 197.2L535.6 205.8M561.1 239.1L552.4 227.6M561.1 239.1L576.2 231.4M578.1 211.7L570.5 206.3M570.5 206.3L561.8 203M552.9 164.5L554.8 165M569.7 185.9L561 176.3M561 176.3L554.8 165M569.7 185.9L561 201.3M589.5 276.4L574.8 275M589.5 276.4L597.8 266.2M590.5 252.8L597.8 266.2M590.5 252.8L580.8 255M580.8 255L571.3 257.8M574.8 275L571.3 257.8M590.5 252.8L595.5 238.8M561.1 239.1L559.5 249.6M571.3 257.8L559.5 249.6M467.4 206.9L459.8 197.1M467.4 206.9L462.3 216.8M462.3 216.8L455.5 225.7M455.5 225.7L451.1 235.9M432.8 212.3L436 203.2M451.1 235.9L440.8 231.7M436 203.2L448.1 200.8M448.1 200.8L459.8 197.1M481.4 209.4L486.5 197.7M486.5 197.7L494.3 187.6M481.4 209.4L467.4 206.9M490.6 178.7L481.1 176.7M481.1 176.7L471.4 176.5M471.4 176.5L461.7 176.9M459.8 197.1L461.6 187.1M461.6 187.1L461.7 176.9M465.5 147.8L474.6 145.8M474.6 145.8L483.8 146.6M483.8 146.6L493 146.3M465.5 147.8L462.1 159.2M462.1 159.2L457.2 170.1M457.2 170.1L461.7 176.9M451.1 235.9L459.3 247.7M515.8 346.2L525.7 361.2M515.8 346.2L500 344.4M525.7 361.2L518.7 371M518.7 371L510 379.4M523.5 391.5L516.2 386M516.2 386L510 379.4M545.3 366.5L542.5 362.4M542.5 362.4L525.7 361.2M591.4 86.1L590.3 97M590.3 97L588.8 107.8M566.4 106.4L575.6 108.3M575.6 108.3L584.8 110.3M584.8 110.3L588.8 107.8M628.5 76.6L626.4 83.4M592.5 84.8L603 89.4M603 89.4L614.1 91.9M614.1 91.9L626.4 83.4M648.8 100L658.1 88M648.8 100L637.6 100.5M658.1 88L650.5 78.5M650.5 78.5L641.6 70.3M641.6 70.3L635.3 71.1M626.4 83.4L630.8 92.7M630.8 92.7L637.6 100.5M569.7 185.9L578.8 183.3M589.9 208.1L593 192.4M593 192.4L578.8 183.3M512 194.5L510.2 212.3M530.5 224.2L530.4 224.3M530.4 224.3L520.6 217.7M520.6 217.7L510.2 212.3M481.4 209.4L491.5 222.7M510.2 212.3L500.1 216.2M500.1 216.2L491.5 222.7M479.9 242.6L491.3 228.8M491.5 222.7L491.3 228.8M617.4 210.1L607.1 211.4M607.1 211.4L596.9 213.4M617.4 210.1L618.7 206.8M605.2 186.1L593 192.4M605.2 186.1L610.4 187.4M610.4 187.4L613.5 197.6M613.5 197.6L618.7 206.8M704.5 155.9L700.6 141.1M704.5 155.9L714.6 157.2M714.6 157.2L724.8 157.2M700.6 141.1L710 134.8M710 134.8L719.9 129.2M726.1 155.6L724.8 157.2M726.1 155.6L727.5 145.2M727.5 145.2L726.5 134.7M726.5 134.7L719.9 129.2M697.1 166.5L704.5 155.9M697.1 166.5L697.3 170.2M697.3 170.2L704.2 177M704.2 177L712.6 181.8M712.6 181.8L727.5 176.9M727.5 176.9L728.9 174.5M728.9 174.5L724.8 157.2M751.1 151.8L752.4 154M751.1 151.8L738.6 153.4M738.6 153.4L726.1 155.6M752.4 154L751.5 164.2M751.5 164.2L747.9 173.7M728.9 174.5L738.4 175.2M738.4 175.2L747.9 173.7M752.9 136.4L751.1 151.8M752.9 136.4L748 131.8M748 131.8L737.1 132.2M737.1 132.2L726.5 134.7M748 131.8L746.2 117.7M718.4 115.1L719.9 129.2M718.4 115.1L734 109.5M655 144.6L664.2 141.7M664.2 141.7L673.9 141M655 144.6L654.7 156.3M654.7 156.3L656.4 167.9M673.9 141L675.9 149.8M675.9 149.8L678.1 158.6M678.1 158.6L666.4 170.2M666.4 170.2L656.4 167.9M653.3 143.7L639.9 146.2M653.3 143.7L655 144.6M632.4 164.4L635.6 155.1M635.6 155.1L639.9 146.2M632.4 164.4L642 166.6M642 166.6L650.8 171.1M650.8 171.1L656.4 167.9M790.6 -13L788.9 -0.8M788.9 -0.8L790 11.4M790 11.4L777.8 14M777.8 14L766.7 3.1M766.7 3.1L770.2 -10.5M755 5.5L766.7 3.1M749 22L759.9 24M759.9 24L770.1 28.5M770.1 28.5L777.8 14M774.3 67.6L780.8 56M780.8 56L789.3 45.7M774.3 67.6L759.5 59.5M759.5 59.5L757.2 49.6M757.2 49.6L764.3 42.5M764.3 42.5L772.2 36.2M789.3 45.7L780 42.2M780 42.2L772.2 36.2M775.1 70.5L774.3 67.6M775.1 70.5L784.5 72.6M784.5 72.6L792.7 77.5M789.3 45.7L796 56M796 56L803.1 66M789.3 45.7L789.3 45.7M792.7 77.5L803.1 66M741.9 75.4L750.6 67.3M750.6 67.3L759.5 59.5M741.9 75.4L741.8 84.2M763.5 93.4L769 81.8M769 81.8L775.1 70.5M741.9 75.4L733.7 64.2M745.4 43.9L757.2 49.6M770.1 28.5L772.2 36.2M658.1 88L664.9 87.7M641.6 70.3L649.5 61.7M664.9 87.7L673.3 79.1M673.3 79.1L671.2 64M671.2 64L660.4 62.4M660.4 62.4L649.5 61.7M637.9 40.5L650.2 48.1M637.9 40.5L637.9 22.7M637.9 22.7L648.3 23.1M648.3 23.1L658.7 23.8M658.7 23.8L659.1 41.3M659.1 41.3L650.2 48.1M625.2 48.1L637.9 40.5M649.5 61.7L650.2 48.1M661.7 7.3L654.1 1.2M654.1 1.2L645.1 -2.5M637.9 22.7L633.8 18.9M658.7 23.8L662.1 20.8M633.8 18.9L638.2 7.6M638.2 7.6L645.1 -2.5M697.1 166.5L687.3 163.3M687.3 163.3L678.1 158.6M700.6 141.1L689.6 133.8M673.9 141L677.4 136.5M689.6 133.8L677.4 136.5M656.6 116.2L666.9 116.5M656.6 116.2L649.3 123.2M649.3 123.2L651.5 133.4M651.5 133.4L653.3 143.7M677.4 136.5L671 127.1M671 127.1L666.9 116.5M648.8 100L656.6 116.2M664.9 87.7L670.4 96.5M670.4 96.5L675.2 105.6M666.9 116.5L675.2 105.6M697.6 76.7L691.6 82.3M697.6 76.7L709 76M691.6 82.3L692.1 93.6M692.1 93.6L692.9 104.9M709 76L718 86.6M718 86.6L712.5 97M712.5 97L709.2 108.3M709.2 108.3L697.4 108.6M697.4 108.6L692.9 104.9M673.3 79.1L682.4 81M682.4 81L691.6 82.3M675.2 105.6L692.9 104.9M715.7 63.1L709 76M739.2 86L728.7 86.9M728.7 86.9L718 86.6M718.4 115.1L709.2 108.3M689.6 133.8L693.7 121.3M693.7 121.3L697.4 108.6M377.9 213.2L368.8 208.1M368.8 208.1L359.1 204.3M359.1 204.3L361.1 188.2M397.7 197L398.6 193M361.1 188.2L371.4 180M371.4 180L382.7 173.3M398.6 193L390.5 183.3M390.5 183.3L382.7 173.3M352.1 244.2L340.5 234.2M359.1 204.3L356.2 205.4M356.2 205.4L351 215M351 215L346.6 225.1M346.6 225.1L340.5 234.2M682.4 643.6L693.8 631.1M682.4 643.6L687.5 655.4M687.5 655.4L691.6 667.5M693.8 631.1L705.5 633.4M705.5 633.4L716.2 639.1M716.2 639.1L727.9 641.6M691.6 667.5L702.5 667.5M702.5 667.5L713.2 665.3M713.2 665.3L717 656.8M717 656.8L723.9 650.1M723.9 650.1L727.9 641.6M693.5 618.8L693.8 631.1M665.8 642.6L653.9 632.6M665.8 642.6L682.4 643.6M655.8 675.1L652.9 671.4M686.4 679L691.6 667.5M652.9 671.4L655.8 661.2M655.8 661.2L661.2 652.1M661.2 652.1L665.8 642.6M738.4 624.5L732.1 640.2M732.1 640.2L727.9 641.6M727.7 686.8L720.7 675.9M720.7 675.9L713.2 665.3M751.3 660L749.4 674.8M751.3 660L745.9 652.4M745.9 652.4L737.5 647.8M737.5 647.8L732.1 640.2M660.1 523.4L665.2 512.5M665.2 512.5L670 501.5M691.3 527.4L692.9 514.4M692.9 514.4L681 508.8M681 508.8L670 501.5M636.9 521L645.9 522.8M645.9 522.8L654.3 526.5M642.8 497.4L654.6 494M654.6 494L666.7 492.8M666.7 492.8L667.9 493.3M667.9 493.3L670 501.5M744.5 527.1L738.9 535M738.9 535L734.5 543.6M744.5 527.1L739.3 518.9M739.3 518.9L734.7 510.5M734.5 543.6L727.1 536.2M727.1 536.2L718.1 530.8M718.1 530.8L720.4 515.7M720.4 515.7L734.7 510.5M757.9 526L744.5 527.1M734.9 546.5L734.5 543.6M740.9 496.9L734.7 510.5M705.3 535.9L718.1 530.8M704.4 504.8L692.9 514.4M704.4 504.8L711.5 511.6M711.5 511.6L720.4 515.7M798.9 492.3L801.5 491.1M822.2 508.1L811.3 500.2M811.3 500.2L801.5 491.1M817 429.7L806.7 426M806.7 426L796.6 421.6M796.6 421.6L790.4 429.8M790.4 429.8L784.5 438.1M784.5 438.1L791.9 453.9M791.9 453.9L797.3 455.2M797.3 455.2L805.2 449.1M805.2 449.1L809.8 440M809.8 440L817.3 433.5M597.2 666.7L602.9 657.9M602.9 657.9L606.5 648.1M606.5 648.1L611.2 638.8M597.2 666.7L605.8 669.9M605.8 669.9L609.8 674.3M617.4 678.9L620.8 680.2M620.8 680.2L634.5 668.7M634.5 668.7L632.8 658.1M632.8 658.1L630.7 647.4M630.7 647.4L621 642.8M621 642.8L611.2 638.8M596 667L597.2 666.7M606.8 627.3L611.2 638.8M606.8 627.3L596.3 627.7M596.3 627.7L585.9 629.4M585.9 629.4L575.7 632.1M620.8 681L620.8 680.2M652.9 671.4L643.5 671.1M643.5 671.1L634.5 668.7M651.5 632.4L640.7 639.4M640.7 639.4L630.7 647.4M606.8 627.3L609 621.1M609 621.1L620.3 616.1M620.3 616.1L632.4 613.8M751.2 619.4L763.3 624.7M763.3 624.7L775.6 629.8M751.3 660L765.9 654.6M765.9 654.6L769.7 641.8M769.7 641.8L775.6 629.8M784.5 686.9L788.8 678.5M788.8 678.5L792.5 669.8M818.7 672.1L805.6 671.1M805.6 671.1L792.5 669.8M765.9 654.6L773.7 660.2M773.7 660.2L783.5 661.7M783.5 661.7L791.3 667.2M792.5 669.8L791.3 667.2M587.5 596.3L589.4 596.3M566 578.3L576.1 569.8M576.1 569.8L585.5 560.3M585.5 560.3L594.7 561.8M594.7 561.8L600.8 570.8M589.4 596.3L594 588.1M594 588.1L597.8 579.7M597.8 579.7L600.8 570.8M609 621.1L602.7 605.1M589.4 596.3L602.7 605.1M792.7 77.5L794.5 84.6M810.2 66.2L803.1 66M812.8 92.2L804.2 87.1M804.2 87.1L794.5 84.6M764.2 94.8L775.3 96.7M775.3 96.7L786.6 96M794.5 84.6L786.6 96M801.8 118.7L800.5 130M800.5 130L798.9 141.2M801.8 118.7L798.3 114.9M798.3 114.9L796.5 114.4M796.5 114.4L785.9 117.5M785.9 117.5L775.7 121.7M798.9 141.2L782.3 144.5M782.3 144.5L772 131.3M772 131.3L775.7 121.7M810.3 150.3L819.3 142.5M819.3 142.5L829.9 137.1M810.3 150.3L798.9 141.2M822.7 121.6L812.2 120.8M812.2 120.8L801.8 118.7M812.8 92.2L806.6 104.2M806.6 104.2L798.3 114.9M786.6 96L790.3 105.9M790.3 105.9L796.5 114.4M763.7 102.6L770.7 111.5M770.7 111.5L775.7 121.7M810.3 150.3L810.3 150.3M810.3 150.3L803.9 160M803.9 160L795.7 168.1M795.7 168.1L787.7 161.7M787.7 161.7L779.4 155.7M779.4 155.7L782.3 144.5M752.9 136.4L762.1 132.3M762.1 132.3L772 131.3M752.4 154L762.3 156.9M762.3 156.9L771.8 160.8M779.4 155.7L771.8 160.8M712.6 181.8L712.1 191M712.1 191L709.5 199.9M709.5 199.9L711.4 202.6M727.5 176.9L731.7 185M731.7 185L733 194.1M733 194.1L725 203.9M711.4 202.6L725 203.9M810.3 150.3L817.3 159.9M817.3 159.9L823.3 170.2M818.2 232.8L809.3 241.5M809.3 241.5L798.7 248.1M798.7 248.1L804.4 258.3M804.4 258.3L811.1 267.8M815 269L811.1 267.8M782.3 240.4L782.8 244.7M782.3 240.4L789.2 229.7M789.2 229.7L795.9 218.8M782.8 244.7L798.7 248.1M795.9 218.8L797.2 218.4M797.2 218.4L808.2 224.8M808.2 224.8L818.2 232.8M580.7 509.9L582.1 510.5M580.7 509.9L572.2 513.3M572.2 513.3L564.9 518.8M582.1 510.5L585.8 520.6M585.8 520.6L588.5 531.1M564.9 518.8L562.3 529.3M562.3 529.3L571.1 542.5M588.5 531.1L581.6 537.3M581.6 537.3L574.8 543.4M571.1 542.5L574.8 543.4M574.4 492.3L578.1 500.9M578.1 500.9L580.7 509.9M599.2 478.7L604.1 486.7M604.1 486.7L610.5 493.7M608.9 504.7L600.1 507.4M600.1 507.4L590.9 508M590.9 508L582.1 510.5M538.8 497.9L548.2 504M548.2 504L556.1 512M556.1 512L564.9 518.8M603.6 534.3L588.5 531.1M533.9 534.3L543.1 531.1M543.1 531.1L552.9 531.1M552.9 531.1L562.3 529.3M546.4 561.2L555.4 556M555.4 556L563.7 549.8M563.7 549.8L571.1 542.5M585.5 560.3L580.1 551.9M580.1 551.9L574.8 543.4M607.9 543.9L601 552.6M601 552.6L594.7 561.8M662.1 459.1L657.5 450.5M657.5 450.5L652.9 441.9M662.1 459.1L655.4 471.2M652.9 441.9L642.6 449.1M642.6 449.1L631.7 455.4M655.4 471.2L645.1 470.9M645.1 470.9L635 473M635 473L629.7 463.3M629.7 463.3L631.7 455.4M653.4 438.3L652.9 441.9M679.4 459.8L686.8 453.8M679.4 459.8L662.1 459.1M689 444.4L686.8 453.8M666.7 492.8L661.2 481.9M661.2 481.9L655.4 471.2M679.4 459.8L681.1 471.7M681.1 471.7L682 483.7M682 483.7L667.9 493.3M619.7 437.6L624.4 447.4M624.4 447.4L631.7 455.4M631.6 484.5L635 473M606.2 463.8L618 464.3M618 464.3L629.7 463.3M706.4 468.8L701.7 486M706.4 468.8L714.7 463.9M714.7 463.9L729.6 470M705.5 491.7L701.7 486M705.5 491.7L717.9 489.2M717.9 489.2L730.5 488.4M730.5 488.4L729.5 479.2M729.5 479.2L729.6 470M686.8 453.8L697.1 460.7M697.1 460.7L706.4 468.8M682 483.7L691.8 485.1M691.8 485.1L701.7 486M704.1 439.8L716.4 450.8M716.4 450.8L714.7 463.9M704.4 504.8L705.5 491.7M740.8 496.6L730.5 488.4M748.8 464.4L741.5 461.9M741.5 461.9L729.6 470M716.4 450.8L725.7 447.2M725.7 447.2L734 441.5M741.5 461.9L737.3 452.3M737.3 452.3L735.7 442M735.7 442L734 441.5M328.7 58.3L320.2 68.8M320.2 68.8L313.4 80.4M328.7 58.3L338.2 64.8M338.2 64.8L346.4 72.8M346.4 72.8L339.8 84.6M339.8 84.6L335.9 97.4M313.4 80.4L321.2 85.6M321.2 85.6L328.1 92.1M328.1 92.1L335.9 97.4M337.4 103.4L335.9 97.4M364.6 70.6L355.7 73.1M355.7 73.1L346.4 72.8M364.6 70.6L367.6 79.2M367.6 79.2L367.4 88.5M367.4 88.5L369.9 97.2M348.2 33.7L364.3 39.8M348.2 33.7L341.7 41M341.7 41L333.6 46.7M333.6 46.7L328 54.7M328 54.7L328.7 58.3M364.6 70.6L365.9 69.1M365.9 69.1L366.5 59.3M366.5 59.3L365.7 49.5M365.7 49.5L364.3 39.8M384.3 103.9L391.3 94.3M391.3 94.3L398.9 85.2M384.3 103.9L376.9 103.3M398.9 85.2L391.2 77.3M391.2 77.3L384.8 68.4M365.9 69.1L375.4 69.5M375.4 69.5L384.8 68.4M367.4 -21.6L369.3 -9.7M369.3 -9.7L372.8 1.8M372.8 1.8L381.3 8M404.1 -13.1L397 -5.5M397 -5.5L389.6 1.8M389.6 1.8L381.3 8M564.9 37.6L550.4 45.2M558.7 71.5L552.6 65.4M550.4 45.2L551.6 55.3M551.6 55.3L552.6 65.4M559.4 14L545.3 10.9M545.3 10.9L545.7 1.1M545.7 1.1L546.5 -8.8M340.3 -4.4L349 10M340.3 -4.4L330.9 -2.8M330.9 -2.8L321.4 -1.7M321.4 -1.7L312.2 0.9M319.4 18.6L314.2 11.2M314.2 11.2L310.2 3.1M319.4 18.6L331.9 22.5M331.9 22.5L344.6 25.3M344.6 25.3L349 10M312.2 0.9L310.2 3.1M372.8 1.8L361 6.4M361 6.4L349 10M316.5 -23.6L315.6 -11.1M315.6 -11.1L312.2 0.9M307.7 44.6L309.7 44.4M309.7 44.4L312.8 35.7M312.8 35.7L315.9 27.1M315.9 27.1L319.4 18.6M296 3.9L310.2 3.1M348.2 33.7L344.6 25.3M328 54.7L318.7 49.8M318.7 49.8L309.7 44.4M589.5 276.4L595.6 292.8M574.8 275L567.4 283.7M574.3 299L567.4 283.7M574.3 299L583 302M595.6 292.8L583 302M593.7 379.6L595.7 368.6M622.7 385.4L622.1 374.9M622.1 374.9L617.6 365.3M617.6 365.3L616.8 354.9M595.7 368.6L605.3 361.4M605.3 361.4L614.8 354.2M616.8 354.9L614.8 354.2M655.4 271.4L655.8 258.1M655.8 258.1L654.6 244.9M655.4 271.4L662.4 275.2M667.6 274.2L662.4 275.2M667.6 274.2L675 263.3M675 263.3L683.1 252.9M683.1 252.9L673.5 250.5M673.5 250.5L663.7 249.1M663.7 249.1L654.6 244.9M686 252L682.5 241.9M682.5 241.9L681.4 231.4M686 252L683.1 252.9M681.4 231.4L665 224.8M665 224.8L656.9 231.6M656.9 231.6L650.8 240.3M650.8 240.3L654.6 244.9M617.4 210.1L622.7 225.6M597.9 237.5L608.3 238.5M608.3 238.5L616.3 232.9M616.3 232.9L622.7 225.6M807.2 -15.7L809.8 -6.4M809.8 -6.4L814 2.3M801.4 18.1L802.5 17.8M801.4 18.1L799.1 28.9M799.1 28.9L796.8 39.6M802.5 17.8L811.4 22.1M811.4 22.1L820.9 24.7M820.9 24.7L829.9 28.6M796.8 39.6L809.5 43.3M809.5 43.3L822.2 47.1M814 2.3L807 9.1M807 9.1L802.5 17.8M790 11.4L801.4 18.1M789.3 45.7L796.8 39.6M557.7 114.8L558.8 111.5M565.2 133.5L568.4 134.4M584.8 110.3L582.1 127M568.4 134.4L582.1 127M604.9 127.5L601 112.6M604.9 127.5L614.4 129.7M614.4 129.7L623.9 131.3M623.9 131.3L629.3 121M601 112.6L613.8 105.9M613.8 105.9L628.2 116M629.3 121L628.2 116M588.8 107.8L601 112.6M595.6 136.1L582.1 127M595.6 136.1L604.9 127.5M649.3 123.2L639.3 121.9M639.3 121.9L629.3 121M639.9 146.2L631.5 140.6M631.5 140.6L624.3 133.7M624.3 133.7L623.9 131.3M614.1 91.9L613.8 105.9M637.6 100.5L634.2 109M634.2 109L628.2 116M511.7 240.6L527.1 231.7M511.7 240.6L510 249.7M510 249.7L511 258.8M527.1 231.7L529.9 240.5M529.9 240.5L536.5 247.4M536.5 247.4L539.1 256.2M539.1 256.2L526 258.3M526 258.3L512.9 260.1M512.9 260.1L511 258.8M530.4 224.3L527.1 231.7M491.3 228.8L501.5 234.7M501.5 234.7L511.7 240.6M496.1 262.6L511 258.8M545 259.3L559.5 249.6M545 259.3L539.1 256.2M697.3 170.2L691.9 178M691.9 178L685.9 185.3M666.4 170.2L673 182.3M673 182.3L685.9 185.3M709.5 199.9L699.2 197.9M699.2 197.9L689 195.3M685.9 185.3L689 195.3M691.7 220.1L682.8 206.5M691.7 220.1L704.3 221.8M704.3 221.8L707.2 211.9M707.2 211.9L711.4 202.6M689 195.3L682.8 206.5M681.4 231.4L691.7 220.1M665 224.8L665.1 209.8M682.8 206.5L665.1 209.8M733 194.1L742.6 195.9M742.6 195.9L752.3 195.5M747.9 173.7L753.4 180.3M752.3 195.5L753.4 180.3M771.8 160.8L770.7 174.8M753.4 180.3L762.1 177.7M762.1 177.7L770.7 174.8M675.4 58.1L672.7 46.8M675.4 58.1L690.5 58.8M672.7 46.8L677.8 38.9M677.8 38.9L684.8 32.6M690.5 58.8L699.4 48M684.8 32.6L696.8 38.9M696.8 38.9L699.4 48M671.2 64L675.4 58.1M659.1 41.3L672.7 46.8M697.6 76.7L693.7 67.9M693.7 67.9L690.5 58.8M681.8 24.4L684.8 32.6M712.4 53.6L699.4 48M708.1 29.3L696.8 38.9M606 -0.8L618.2 0.2M606 -0.8L602.4 9.3M602.4 9.3L600.6 20M618.2 0.2L623 10M623 10L629.9 18.5M600.6 20L615.8 27M615.8 27L629.9 18.5M628.6 -10.6L618.2 0.2M595 22.3L600.6 20M633.8 18.9L629.9 18.5M615.6 45L614.6 36M614.6 36L615.8 27M188.6 -10.6L182.1 1.5M182.1 1.5L185.4 10.9M185.4 10.9L188.2 20.6M188.2 20.6L199.1 20.6M199.1 20.6L210 21.3M210 21.3L213.2 10.6M213.2 10.6L219.2 1.1M213.9 -7.1L219.2 1.1M156.1 2.8L169.1 2.4M169.1 2.4L182.1 1.5M233.5 3.7L219.2 1.1M236.1 31.6L226.7 31.4M226.7 31.4L217.3 30.6M217.3 30.6L210 21.3M424 181.9L431.7 175.5M431.7 175.5L440 169.8M424 181.9L419.4 181.5M419.4 181.5L414 173.2M414 173.2L412.6 163.2M412.6 163.2L407.7 154.7M440 169.8L437.2 160.4M437.2 160.4L432 152M432 152L427.6 143.4M407.7 154.7L416.8 148.2M416.8 148.2L426.9 143.2M427.6 143.4L426.9 143.2M436 203.2L430.8 192.1M430.8 192.1L424 181.9M457.2 170.1L440 169.8M398.6 193L409.1 187.4M409.1 187.4L419.4 181.5M465.5 147.8L461.3 139.6M461.3 139.6L455.4 132.6M455.4 132.6L446.1 136M446.1 136L436.5 139M436.5 139L427.6 143.4M415.5 118.4L420 113.3M415.5 118.4L420.1 126.3M420.1 126.3L422.8 135M422.8 135L426.9 143.2M455.4 132.6L455.6 130.1M420 113.3L429.9 110.3M429.9 110.3L440.3 109.2M455.6 130.1L448.4 119.3M448.4 119.3L440.3 109.2M382.5 169.5L392.6 162.2M392.6 162.2L401.4 153.4M382.5 169.5L375.2 161.6M375.2 161.6L366.6 154.9M364.9 141L373.9 138.5M373.9 138.5L382.8 135.7M382.8 135.7L392.2 134.8M364.9 141L366.6 154.9M392.2 134.8L397.9 143.6M397.9 143.6L401.4 153.4M382.7 173.3L382.5 169.5M407.7 154.7L401.4 153.4M346.9 171.2L352.8 180.7M352.8 180.7L361.1 188.2M346.9 171.2L357.1 163.5M357.1 163.5L366.6 154.9M384.3 103.9L391.8 111.7M391.8 111.7L398.6 120.2M398.6 120.2L392.2 134.8M358.1 134.2L364.9 141M398.6 120.2L415.5 118.4M328 186.3L316.1 186.7M316.1 186.7L304.3 187.2M328 186.3L332.1 197.3M332.1 197.3L327.5 206.5M327.5 206.5L321 214.3M304.3 187.2L300.8 204M300.8 204L308.8 214.1M308.8 214.1L321 214.3M334.8 170.3L328 186.3M334.8 170.3L346.9 171.2M356.2 205.4L344.3 200.9M344.3 200.9L332.1 197.3M340.5 234.2L335.4 234M335.4 234L328.7 223.8M328.7 223.8L321 214.3M277.5 207.3L277 216.8M277 216.8L274.2 226M277.5 207.3L289.1 205.6M289.1 205.6L300.8 204M274.2 226L277.8 232.3M277.8 232.3L287.9 232.5M287.9 232.5L297.8 234.2M297.8 234.2L304.1 224.6M304.1 224.6L308.8 214.1M335.4 234L327.5 239.8M327.5 239.8L320.1 246.3M320.1 246.3L312.2 252.1M312.2 252.1L305.9 242.5M305.9 242.5L297.8 234.2M270.4 195.5L272.2 183.6M270.4 195.5L277.5 207.3M272.2 183.6L277.7 179.3M304.3 187.2L299.2 180.4M277.7 179.3L288.5 179.5M288.5 179.5L299.2 180.4M271.3 112.9L273.8 116.5M271.3 112.9L271.6 103.7M271.6 103.7L272.3 94.5M272.3 94.5L273.2 85.4M273.8 116.5L280.1 117.1M280.1 117.1L290.2 108.4M290.2 108.4L300.9 100.5M273.2 85.4L281.8 81M281.8 81L290.5 76.7M300.9 100.5L300.3 83.5M300.3 83.5L290.5 76.7M289.8 70.2L290.5 76.7M254.6 78.6L264.1 81.5M264.1 81.5L273.2 85.4M254.6 78.6L256.2 69.5M256.2 69.5L254.8 60.4M337.2 103.8L326.8 108.4M326.8 108.4L317.5 115.1M313.4 80.4L300.3 83.5M317.5 115.1L309.1 108M309.1 108L300.9 100.5M130 126.7L141.3 126.9M141.3 126.9L152.4 128.6M152.4 128.6L163.5 130.4M159.6 166.2L161.8 156M161.8 156L164 145.9M164 145.9L167.6 136.1M167.6 136.1L163.5 130.4M270.4 195.5L259.7 199M259.7 199L249.2 203.2M249.2 203.2L238.1 205.2M272.2 183.6L263.9 178.6M263.9 178.6L254.7 175.1M254.7 175.1L247 169.1M238.1 205.2L238.1 195.4M238.1 195.4L237.7 185.5M237.7 185.5L238.5 175.7M238.5 175.7L247 169.1M266.5 146.5L279.3 153.5M266.5 146.5L256.8 154.9M256.8 154.9L247.8 164.1M279.3 153.5L278.6 166.4M278.6 166.4L277.7 179.3M247.8 164.1L247 169.1M254.6 78.6L245.6 85M271.3 112.9L259.9 109.5M259.9 109.5L248.6 105.9M248.6 105.9L247.9 95.3M247.9 95.3L245.6 85M804.4 486.5L815.1 482.1M815.1 482.1L826 478.2M804.4 486.5L801.2 476.7M801.2 476.7L800.8 466.4M800.8 466.4L798.5 456.4M798.5 456.4L810.4 459M810.4 459L822.1 462.2M801.5 491.1L804.4 486.5M791.9 453.9L778.8 464.2M797.3 455.2L798.5 456.4M797.1 643.4L802 642.1M806 641L814.5 637.6M797.1 643.4L789.4 634.7M789.4 634.7L779.6 628.5M779.6 628.5L784.1 620.5M784.1 620.5L788.7 612.6M819 626.3L809.9 618.8M809.9 618.8L806 615.9M801.2 612.4L800.4 611.7M788.7 612.6L800.4 611.7M791.3 667.2L794 655.3M794 655.3L797.1 643.4M775.6 629.8L779.6 628.5M775.7 590.2L782.2 601.4M782.2 601.4L788.7 612.6M812.2 591L806.4 601.4M806.4 601.4L806 602.1M801.1 610.6L800.4 611.7M614.3 574.5L619.7 587.2M614.3 574.5L623.7 566.6M623.7 566.6L632.1 557.7M632.1 557.7L642.8 561.6M635.4 592.5L619.7 587.2M635.4 592.5L639.6 583.7M639.6 583.7L641.7 574.3M641.7 574.3L644.4 565.1M642.8 561.6L644.4 565.1M602.7 605.1L610.5 595.6M610.5 595.6L619.7 587.2M600.8 570.8L614.3 574.5M625.9 547.7L632.1 557.7M656.7 547.5L648.8 553.5M648.8 553.5L642.8 561.6M638.3 597L635.4 592.5M667.2 579.4L655.7 572.5M655.7 572.5L644.4 565.1M686 252L688.3 252.6M688.3 252.6L698.7 245M698.7 245L709.6 238.2M704.3 221.8L710.8 231.8M709.6 238.2L710.8 231.8M725 203.9L729.6 211.9M729.6 211.9L734.5 219.6M753.1 196.7L752.3 195.5M753.1 196.7L752.2 206.8M752.2 206.8L743.6 213.6M743.6 213.6L734.5 219.6M779.2 208.2L777.7 196.7M779.2 208.2L772.8 215.7M772.8 215.7L765.2 222M753.1 196.7L765.4 197.1M765.4 197.1L777.7 196.7M752.2 206.8L758.6 214.6M758.6 214.6L765.2 222M782.3 240.4L772.9 232.7M772.9 232.7L765.2 223.2M779.2 208.2L786.9 214.4M786.9 214.4L795.9 218.8M765.2 222L765.2 223.2M710.8 231.8L722.3 227.9M722.3 227.9L733.9 224.1M734.5 219.6L733.9 224.1M796.2 172.7L788.9 179.3M788.9 179.3L783 187.2M796.2 172.7L810.1 179.2M810.1 179.2L811.9 188.9M811.9 188.9L811.7 198.7M783 187.2L783 188.6M783 188.6L791.2 192.4M791.2 192.4L799.3 196.5M799.3 196.5L807.4 200.5M811.7 198.7L807.4 200.5M795.7 168.1L796.2 172.7M770.7 174.8L783 187.2M823.3 170.2L810.1 179.2M824.2 202L811.7 198.7M777.7 196.7L783 188.6M797.2 218.4L801.4 209M801.4 209L807.4 200.5M688.3 252.6L695 262.8M695 262.8L701.3 273.2M701.3 273.2L713.5 268.8M709.6 238.2L715.9 244.8M715.9 244.8L721.5 251.8M713.5 268.8L716.6 259.9M716.6 259.9L721.5 251.8M398.7 49.1L386.9 42.8M386.9 42.8L376.7 33.9M398.7 49.1L403.8 40.6M403.8 40.6L410.3 33M410.3 33L415.5 24.6M415.5 24.6L412.5 20.3M412.5 20.3L402.9 18.8M402.9 18.8L393.6 15.8M393.6 15.8L383.7 15.8M376.7 33.9L379.5 24.6M379.5 24.6L383.7 15.8M384.8 68.4L391.7 59M391.7 59L399 50M364.3 39.8L376.7 33.9M399 50L398.7 49.1M416.2 -5.7L414.1 7.3M414.1 7.3L412.5 20.3M381.3 8L383.7 15.8M541.8 95.7L534.6 95.6M526 75.3L534.9 72.2M534.9 72.2L544 69.4M544 69.4L552.6 65.4M526 75.3L524.2 80.5M524.2 80.5L530.5 87.3M530.5 87.3L534.6 95.6M531.2 125.7L524.6 117.5M534.6 95.6L530.1 106.8M530.1 106.8L524.6 117.5M493.8 145.4L495.3 132.4M495.3 132.4L504.7 127.6M504.7 127.6L514.2 122.9M514.2 122.9L523.1 117.3M524.6 117.5L523.1 117.3M526 75.3L523.8 64.6M523.8 64.6L519 54.8M550.4 45.2L549.1 44.6M519 54.8L528.7 50.6M528.7 50.6L538.7 47.1M538.7 47.1L549.1 44.6M434.6 82.2L424.7 85.5M424.7 85.5L414.5 87.5M434.6 82.2L438.8 69.4M438.8 69.4L431.4 63.6M431.4 63.6L424.2 57.6M408.1 83.5L412.2 72M412.2 72L413.3 59.8M408.1 83.5L414.5 87.5M413.3 59.8L424.2 57.6M420 113.3L417 100.4M417 100.4L414.5 87.5M440.3 109.2L444.9 98.5M444.9 98.5L440.1 90.1M440.1 90.1L434.6 82.2M398.9 85.2L408.1 83.5M399 50L413.3 59.8M415.5 24.6L424.3 27.4M424.3 27.4L431.3 38.8M431.3 38.8L428 48.3M428 48.3L424.2 57.6M545 259.3L544.5 270.9M567.4 283.7L554.2 282.4M544.5 270.9L554.2 282.4M619.5 300.9L628.3 293.6M628.3 293.6L636.7 285.9M619.5 300.9L613.6 299.8M613.6 299.8L609 294.8M609 294.8L610.6 285.7M610.6 285.7L614.4 277.1M614.4 277.1L615.5 267.9M615.5 267.9L623.6 263M637.3 275.5L631.2 268.5M631.2 268.5L623.7 263M637.3 275.5L636.7 285.9M623.6 263L623.7 263M654.3 304L644.3 296.1M644.3 296.1L636.7 285.9M654.3 304L642.7 308.7M642.7 308.7L631.8 315M631.8 315L624.8 308.7M624.8 308.7L619.5 300.9M597.8 266.2L615.5 267.9M595.6 292.8L609 294.8M608.3 238.5L613.9 246.3M613.9 246.3L617.5 255.4M617.5 255.4L623.6 263M650.8 240.3L644.9 239.4M655.4 271.4L646.3 273.2M646.3 273.2L637.3 275.5M644.9 239.4L638.2 247.5M638.2 247.5L630.2 254.6M630.2 254.6L623.7 263M658.5 304.5L660.4 294.8M660.4 294.8L661.4 285M661.4 285L662.4 275.2M658.5 304.5L654.3 304M622.7 225.6L637.5 230.3M637.5 230.3L644.9 239.4M583 302L584.9 311.9M584.9 311.9L587.9 321.5M613.6 299.8L607 309.4M607 309.4L602.7 320.3M602.7 320.3L587.9 321.5M631.8 315L631 322.9M631 322.9L621.5 326.5M621.5 326.5L611.9 329.8M602.7 320.3L611.9 329.8M658.5 304.5L658.7 304.6M658.7 304.6L668.6 303.6M668.6 303.6L677.7 299.7M677.7 299.7L687.4 297.5M667.6 274.2L674.4 280.6M674.4 280.6L681.9 285.9M681.9 285.9L690.4 289.7M687.4 297.5L690.4 289.7M701.3 273.2L698.2 283.7M690.4 289.7L698.2 283.7M663.3 375.6L669.7 361.3M701.3 385.5L698.5 387.5M701.3 385.5L701.6 380.7M701.6 380.7L694.4 374M694.4 374L687.2 367.3M687.2 367.3L681.7 359M669.7 361.3L681.7 359M595.7 141.6L587.5 148.6M587.5 148.6L579.2 155.5M595.7 141.6L603.9 148.1M603.9 148.1L611.9 154.7M612 155.3L611.9 154.7M612 155.3L598.7 167.2M598.7 167.2L585.5 164.9M585.5 164.9L579.1 155.9M579.1 155.9L579.2 155.5M595.6 136.1L595.7 141.6M568.4 134.4L573.9 144.9M573.9 144.9L579.2 155.5M624.3 133.7L618.4 144.3M618.4 144.3L611.9 154.7M626.7 166.6L632.4 164.4M626.7 166.6L619.6 160.6M619.6 160.6L612 155.3M626.7 166.6L624 178.1M605.2 186.1L600.6 177.1M600.6 177.1L598.7 167.2M610.4 187.4L624 178.1M578.8 183.3L581.2 173.8M581.2 173.8L585.5 164.9M554.8 165L566.5 159.2M566.5 159.2L579.1 155.9M661.3 195L663.6 208.3M661.3 195L647.8 187M663.6 208.3L654.1 210.9M654.1 210.9L644.4 210.4M644.4 210.4L636 200.4M647.8 187L638.8 191.5M636 200.4L638.8 191.5M673 182.3L661.3 195M665.1 209.8L663.6 208.3M650.8 171.1L647.8 187M637.5 230.3L642.3 220.8M642.3 220.8L644.4 210.4M618.7 206.8L627.7 204.5M627.7 204.5L636 200.4M624 178.1L631.5 184.7M631.5 184.7L638.8 191.5M184.9 26.8L188.2 20.6M184.9 26.8L172.6 32.1M172.6 32.1L159.4 34.4M236.5 53.5L222.8 62.6M245.6 85L233.5 83.4M222.8 62.6L227.6 73.3M227.6 73.3L233.5 83.4M293.7 149.1L305.5 162M293.7 149.1L299.3 134.3M314 128.9L299.3 134.3M314 128.9L323.2 136M323.2 136L330.8 144.9M305.5 162L316.8 160M316.8 160L328.1 159M328.1 159L330.8 144.9M279.3 153.5L293.7 149.1M299.2 180.4L301.2 170.8M301.2 170.8L305.5 162M266.5 146.5L263.4 134.9M263.4 134.9L268 125.4M268 125.4L273.8 116.5M280.1 117.1L289.7 125.6M289.7 125.6L299.3 134.3M317.5 115.1L314 128.9M353.1 133.2L341.8 138.7M341.8 138.7L330.8 144.9M334.8 170.3L328.1 159M129 95.7L139.8 94.1M139.8 94.1L150.3 90.6M150.3 90.6L161.3 90.1M163.5 130.4L166.3 121.8M166.3 121.8L168.9 113.1M168.9 113.1L171.1 104.3M161.3 90.1L171.1 104.3M152.5 51.2L160.5 59.6M160.5 59.6L168.8 67.7M161.3 90.1L165.7 79.1M165.7 79.1L168.8 67.7M203.4 119.4L198.4 129.2M198.4 129.2L195.8 139.9M203.4 119.4L214.2 116.9M214.2 116.9L225.2 115.5M231.5 141.5L223 146.7M223 146.7L213.6 150.3M231.5 141.5L236.2 130.5M213.6 150.3L200.1 146.6M236.2 130.5L232.6 119.7M200.1 146.6L195.8 139.9M232.6 119.7L225.2 115.5M167.6 136.1L176.8 138.7M176.8 138.7L186.2 139.9M186.2 139.9L195.8 139.9M171.1 104.3L182.2 104.9M182.2 104.9L193.3 103.6M193.3 103.6L197.4 112.1M197.4 112.1L203.4 119.4M222.5 92.9L212.4 89.5M212.4 89.5L201.8 88M222.5 92.9L225 104.1M225 104.1L225.2 115.5M193.3 103.6L201.8 88M222.1 172.1L238.5 175.7M222.1 172.1L218.9 160.8M218.9 160.8L213.6 150.3M247.8 164.1L243.6 155.7M243.6 155.7L237.6 148.6M237.6 148.6L231.5 141.5M263.4 134.9L254.2 134.1M254.2 134.1L245.3 131.7M245.3 131.7L236.2 130.5M248.6 105.9L240.4 112.6M240.4 112.6L232.6 119.7M159.6 166.2L169.3 168.8M169.3 168.8L179.1 170.7M179.1 170.7L188.8 173.1M188.8 173.1L193.9 164.8M193.9 164.8L196.7 155.6M196.7 155.6L200.1 146.6M233.5 83.4L222.5 92.9M277.8 232.3L274.4 242.3M274.4 242.3L270.1 251.9M274.2 226L264.3 226.3M264.3 226.3L254.7 224.6M254.7 224.6L245.1 223M245.1 223L243.4 232.2M243.4 232.2L239.7 240.7M238.1 205.2L236.9 207M245.1 223L236.9 207M155.1 193.5L163.8 201M163.8 201L172.1 208.9M150.4 238L154.6 229.8M154.6 229.8L160.9 223.2M160.9 223.2L166 215.7M166 215.7L172.1 208.9M796.6 421.6L794 410.4M794 410.4L803.6 402.2M825.4 405.9L814.4 404.4M814.4 404.4L803.6 402.2M769.4 408.3L758.8 409.4M758.8 409.4L748.2 411.1M769.4 408.3L770 421.3M770 421.3L773.5 433.8M748.2 411.1L747 422.7M747 422.7L748.7 434.2M748.7 434.2L760.5 439.2M760.5 439.2L773.5 433.8M784.5 438.1L773.5 433.8M794 410.4L784.3 406.9M784.3 406.9L774.5 403.4M774.5 403.4L769.4 408.3M761.2 456.6L760.5 439.2M735.7 442L748.7 434.2M738.3 388.8L741.4 397.7M741.4 397.7L742.5 407M738.3 388.8L729 388.4M729 388.4L719.9 389.6M719.9 389.6L710.9 391.5M742.5 407L734.3 411.3M734.3 411.3L726.2 415.6M726.2 415.6L718 419.8M710.9 391.5L712.9 400.9M712.9 400.9L715.5 410.2M715.5 410.2L717.2 419.7M717.2 419.7L718 419.8M734 441.5L726.4 430.4M726.4 430.4L718 419.8M748.2 411.1L742.5 407M701.3 385.5L710.9 391.5M712.7 421.7L717.2 419.7M782.8 244.7L779.5 249.2M811.1 267.8L801.2 271.5M801.2 271.5L791.4 275.6M779.5 249.2L780.4 260.7M780.4 260.7L783.9 271.8M791.4 275.6L783.9 271.8M740.1 263.6L730.9 251.7M740.1 263.6L749.1 261.5M749.1 261.5L757.6 258M730.9 251.7L735.5 242.4M735.5 242.4L742.5 234.8M757.6 258L759.8 254.2M759.8 254.2L754.7 244.4M754.7 244.4L747.8 235.9M747.8 235.9L742.5 234.8M735.1 279.5L723.6 275.5M723.6 275.5L713.5 268.8M735.1 279.5L740.1 263.6M721.5 251.8L730.9 251.7M733.9 224.1L742.5 234.8M779.5 249.2L769.6 251.4M769.6 251.4L759.8 254.2M764.2 283.2L774 277.5M774 277.5L783.9 271.8M764.2 283.2L762.3 270.3M762.3 270.3L757.6 258M765.2 223.2L756.2 229.2M756.2 229.2L747.8 235.9M545.3 10.9L538 15.6M517.4 -9.7L520.7 6.4M520.7 6.4L530 9.8M530 9.8L538 15.6M549.1 44.6L542.5 36.8M542.5 36.8L537 28.2M538 15.6L537 28.2M428.4 -8.6L438.2 -2.4M438.2 -2.4L448.3 3.1M424.3 27.4L433.1 21M433.1 21L441.4 14M441.4 14L449.3 6.5M448.3 3.1L449.3 6.5M448.3 3.1L454.2 -4.3M454.2 -4.3L458.4 -12.8M458.4 -12.8L463.1 -21M516.4 -10.9L505.9 -6.9M505.9 -6.9L496.9 0.1M496.9 0.1L486.5 4.1M479.1 -17.4L482.8 -6.6M482.8 -6.6L486.5 4.1M431.3 38.8L443.8 41.7M443.8 41.7L456.6 42.1M449.3 6.5L455.9 12.5M456.6 42.1L456.1 32.3M456.1 32.3L456.2 22.4M456.2 22.4L455.9 12.5M438.8 69.4L451.6 65M451.6 65L455.4 55.6M455.4 55.6L460.8 47.1M456.6 42.1L460.8 47.1M486.5 4.1L484.6 12M455.9 12.5L465.5 13.1M465.5 13.1L475.1 12.6M475.1 12.6L484.6 12M487.9 117.7L493.9 108.2M493.9 108.2L501.5 100M487.9 117.7L473.9 113.6M473.9 113.6L472.1 101.9M472.1 101.9L468.1 90.8M488.6 79.3L479.1 84.1M479.1 84.1L469.4 88.5M488.6 79.3L500.3 87.6M468.1 90.8L469.4 88.5M500.3 87.6L501.5 100M495.3 132.4L487.9 117.7M523.1 117.3L515 112.8M515 112.8L508.6 106M508.6 106L501.5 100M455.6 130.1L464.4 121.5M464.4 121.5L473.9 113.6M444.9 98.5L456.6 94.8M456.6 94.8L468.1 90.8M451.6 65L456.5 73.6M456.5 73.6L464.3 80M464.3 80L469.4 88.5M524.2 80.5L512 83.1M512 83.1L500.3 87.6M512.9 260.1L515.7 269.5M515.7 269.5L518.6 278.9M518.6 278.9L508.7 283.5M508.7 283.5L500.3 290.4M544.5 270.9L535 275.6M535 275.6L527 282.4M518.6 278.9L527 282.4M544.8 308.1L543.7 306.4M544.8 308.1L540.7 320M540.7 320L535.4 331.5M543.7 306.4L530.5 301.1M530.5 301.1L520 305.9M520 305.9L516.1 319.1M516.1 319.1L521.7 326.4M521.7 326.4L528.9 332.1M535.4 331.5L528.9 332.1M574.3 299L565.2 304.7M565.2 304.7L557.4 312M557.4 312L544.8 308.1M554.2 282.4L549.3 294.6M549.3 294.6L543.7 306.4M527 282.4L528.5 291.8M528.5 291.8L530.5 301.1M501.1 295.8L511 300.1M511 300.1L520 305.9M499.4 324.7L516.1 319.1M515.8 346.2L523.2 339.9M523.2 339.9L528.9 332.1M547.6 342.9L544.3 352.5M544.3 352.5L542.5 362.4M547.6 342.9L535.4 331.5M587 322.8L587.1 332.8M587.1 332.8L590.3 342.3M587 322.8L576.4 324.8M576.4 324.8L566.2 328M562.2 338L568.7 345.7M568.7 345.7L575.9 352.9M562.2 338L566.2 328M590.3 342.3L580 352.6M575.9 352.9L580 352.6M610.1 346.5L611.9 329.8M610.1 346.5L600 345.1M600 345.1L590.3 342.3M587.9 321.5L587 322.8M557.4 312L560.8 320.5M560.8 320.5L566.2 328M565.4 369.1L571.1 361.3M571.1 361.3L575.9 352.9M547.6 342.9L562.2 338M595.7 368.6L587.4 361M587.4 361L580 352.6M614.8 354.2L610.1 346.5M735.1 279.5L736.1 282.5M698.2 283.7L708.3 289.3M708.3 289.3L717.8 296M717.8 296L727.4 289.9M727.4 289.9L736.1 282.5M764.2 283.2L762.4 287.2M762.4 287.2L753.1 287.7M753.1 287.7L743.9 287.9M736.1 282.5L743.9 287.9M660 333.4L659.4 347.2M660 333.4L647.8 331.5M647.8 331.5L635.7 329.7M659.4 347.2L647.5 349.8M647.5 349.8L636.5 355.4M635.7 329.7L632.9 341M632.9 341L629.8 352.2M636.5 355.4L629.8 352.2M631 322.9L635.7 329.7M658.7 304.6L662.2 316M662.2 316L664.3 327.7M664.3 327.7L660 333.4M644.9 378.3L640.8 366.8M640.8 366.8L636.5 355.4M669.7 361.3L659.4 347.2M616.8 354.9L629.8 352.2M674.9 328L683.4 337.1M683.4 337.1L692.9 345.1M674.9 328L683.9 320.1M683.9 320.1L693 312.5M699.1 316.1L693 312.5M699.1 316.1L698.7 329.6M698.7 329.6L701.2 342.9M701.2 342.9L692.9 345.1M664.3 327.7L674.9 328M681.7 359L692.9 345.1M687.4 297.5L693 312.5M717.8 296L719.3 312.4M719.3 312.4L709 313.1M709 313.1L699.1 316.1M701.6 380.7L707.3 373.4M707.3 373.4L712.9 366.1M702.6 343.4L707.7 354.8M707.7 354.8L712.9 366.1M702.6 343.4L701.2 342.9M764.8 379.6L752.6 383.4M752.6 383.4L740 385.1M764.8 379.6L766.6 370.6M766.6 370.6L765.4 361.5M765.4 361.5L755.9 360.7M755.9 360.7L747 357.5M747 357.5L737.7 355.6M740 385.1L735.6 374.8M735.6 374.8L733.4 363.8M733.4 363.8L737.7 355.6M774.5 403.4L774.5 388.2M774.5 388.2L764.8 379.6M738.3 388.8L740 385.1M712.9 366.1L723 363.5M723 363.5L733.4 363.8M774.5 388.2L785 380.8M785 380.8L796.9 376.2M803.6 402.2L803.6 390.7M803.6 390.7L800.8 379.6M796.9 376.2L800.8 379.6M807.2 349.4L819.4 354.7M819.4 354.7L831.9 358.9M807.2 349.4L811.2 336M832.5 324.4L821.7 329.9M821.7 329.9L811.2 336M179.9 65.7L188.9 73.7M188.9 73.7L199.6 79.3M179.9 65.7L185.6 57M185.6 57L191.7 48.5M199.6 79.3L208.7 69.8M208.7 69.8L219.3 61.9M191.7 48.5L209.6 48.7M209.6 48.7L219.3 61.9M201.8 88L199.6 79.3M168.8 67.7L179.9 65.7M184.9 26.8L188.6 37.6M188.6 37.6L191.7 48.5M222.8 62.6L219.3 61.9M217.3 30.6L212.8 39.3M212.8 39.3L209.6 48.7M223.9 208L218.2 217.7M218.2 217.7L211.8 227M211.8 227L207.9 237.6M223.9 208L215.4 202.5M215.4 202.5L206.1 198.4M206.1 198.4L198.3 191.8M181.2 208.5L187.3 216.1M187.3 216.1L189.5 226M189.5 226L195.1 233.9M195.1 233.9L200.1 242.1M181.2 208.5L190.7 201.2M190.7 201.2L198.1 191.8M207.9 237.6L200.1 242.1M198.1 191.8L198.3 191.8M239.7 240.7L229.2 238.8M229.2 238.8L218.6 237.8M218.6 237.8L207.9 237.6M236.9 207L223.9 208M222.1 172.1L213.5 177.8M213.5 177.8L206.4 185.4M206.4 185.4L198.3 191.8M172.1 208.9L181.2 208.5M188.8 173.1L193.4 182.5M193.4 182.5L198.1 191.8M460.8 47.1L468.9 47.3M488.6 79.3L489 63M489 63L479.8 54.1M479.8 54.1L468.9 47.3M719.7 312.7L729.8 311.7M729.8 311.7L739.8 309.9M719.7 312.7L722.5 324.3M722.5 324.3L724.4 336.1M739.8 309.9L750.9 320.6M724.4 336.1L736.6 342.4M736.6 342.4L743.6 335M743.6 335L752.2 329.5M750.9 320.6L752.2 329.5M743.9 287.9L743 299.1M743 299.1L739.8 309.9M719.3 312.4L719.7 312.7M702.6 343.4L713.3 339.2M713.3 339.2L724.4 336.1M762.4 287.2L769.3 299.1M769.3 299.1L763.6 306.7M763.6 306.7L756.1 312.6M756.1 312.6L750.9 320.6M737.7 355.6L736.6 342.4M779.7 329.9L769 335.6M779.7 329.9L787.9 336.6M787.9 336.6L794.8 344.9M794.8 344.9L803.4 351.2M769 335.6L770.2 346M770.2 346L770.2 356.5M770.2 356.5L783 360.1M783 360.1L796.1 361.8M796.1 361.8L803.4 351.2M765.4 361.5L770.2 356.5M752.2 329.5L769 335.6M796.9 376.2L796.1 361.8M784.7 319.8L779.9 304.1M784.7 319.8L802.6 320M779.9 304.1L793.6 294.4M793.6 294.4L802.6 297.9M802.6 297.9L812.3 298.6M802.6 320L809.4 312.3M809.4 312.3L815.2 303.9M769.3 299.1L779.9 304.1M779.7 329.9L784.7 319.8M807.2 349.4L803.4 351.2M811.2 336L805.8 328.6M805.8 328.6L802.6 320M791.4 275.6L792.2 285M792.2 285L793.6 294.4M800.8 379.6L811.7 380.2M811.7 380.2L822.6 380.6M511.6 49.3L517.7 34.4M511.6 49.3L506.3 49.9M506.3 49.9L500.9 40.8M500.9 40.8L494.9 32.2M494.9 32.2L488 24.2M517.7 34.4L510.2 18.3M510.2 18.3L499.5 19.7M499.5 19.7L488.7 18.6M488.7 18.6L488 24.2M519 54.8L511.6 49.3M537 28.2L527.3 31.2M527.3 31.2L517.7 34.4M489 63L497.8 56.7M497.8 56.7L506.3 49.9M468.9 47.3L474.2 38.7M474.2 38.7L482.6 32.7M482.6 32.7L488 24.2M520.7 6.4L510.2 18.3M484.6 12L488.7 18.6M-10 278.1L9.8 278.1M9.8 276.1L45.9 276.1M45.9 276.1L92.7 276.1M92.7 278.1L130.5 278.1M130.5 275.1L175.9 275.1M175.9 278.1L210.6 278.1M210.6 278.1L247.3 278.1M247.3 275.1L289.4 275.1M289.4 278.1L332.1 278.1M332.1 276.1L361.4 276.1M361.4 275.1L402.5 275.1M402.5 278.1L448.1 278.1M448.1 276.1L475.1 276.1M475.1 276.1L498.1 276.1M9.8 236L9.8 278.1M45.9 236L45.9 260.7M45.9 260.7L50.9 260.7M50.9 260.7L50.9 276.1M92.7 236L92.7 278.1M130.5 236L130.5 278.1M175.9 238.1L175.9 263.2M175.9 263.2L180.9 263.2M180.9 263.2L180.9 278.1M210.6 238L210.6 262.5M210.6 262.5L206.6 262.5M206.6 262.5L206.6 278.1M247.3 238L247.3 278.1M289.4 238L289.4 278.1M332.1 238L332.1 278.1M361.4 238L361.4 276.1M402.5 238L402.5 278.1M448.1 238L448.1 278.1M475.1 238L475.1 276.1M-10 323.3L1.6 323.3M1.6 318.3L45.7 318.3M45.7 320.3L78.2 320.3M78.2 320.3L107.3 320.3M107.3 320.3L134.6 320.3M134.6 317.3L175.7 317.3M175.7 323.3L222 323.3M222 317.3L267.8 317.3M267.8 322.3L298.2 322.3M298.2 318.3L343.1 318.3M343.1 318.3L389.1 318.3M389.1 318.3L416.1 318.3M416.1 322.3L457.2 322.3M457.2 318.3L484.8 318.3M484.8 317.3L507.5 317.3M1.6 278.1L1.6 323.3M45.7 276.1L45.7 320.3M78.2 276.1L78.2 320.3M107.3 278.1L107.3 320.3M134.6 275.1L134.6 301M134.6 301L130.6 301M130.6 301L130.6 320.3M175.7 275.1L175.7 291M175.7 291L180.7 291M180.7 291L180.7 323.3M222 278.1L222 323.3M267.8 275.1L267.8 322.3M298.2 278.1L298.2 297.9M298.2 297.9L303.2 297.9M303.2 297.9L303.2 322.3M343.1 276.1L343.1 318.3M389.1 275.1L389.1 296.1M389.1 296.1L384.1 296.1M384.1 296.1L384.1 318.3M416.1 278.1L416.1 322.3M457.2 276.1L457.2 309M457.2 309L453.2 309M453.2 309L453.2 322.3M484.8 276.1L484.8 318.3M-10 355.6L14.8 355.6M14.8 357.6L46.2 357.6M46.2 355.6L74.5 355.6M74.5 357.6L105.7 357.6M105.7 359.6L142.5 359.6M142.5 357.6L177.3 357.6M177.3 355.6L204.6 355.6M204.6 357.6L240.5 357.6M240.5 357.6L272.7 357.6M272.7 357.6L311.4 357.6M311.4 357.6L339.9 357.6M339.9 357.6L373.4 357.6M373.4 357.6L418.8 357.6M418.8 355.6L464.2 355.6M464.2 359.6L501.4 359.6M501.4 359.6L515.5 359.6M14.8 318.3L14.8 357.6M46.2 320.3L46.2 357.6M74.5 320.3L74.5 349.1M74.5 349.1L70.5 349.1M70.5 349.1L70.5 357.6M105.7 320.3L105.7 339.9M105.7 339.9L109.7 339.9M109.7 339.9L109.7 359.6M142.5 317.3L142.5 359.6M177.3 323.3L177.3 357.6M204.6 323.3L204.6 357.6M240.5 317.3L240.5 357.6M272.7 322.3L272.7 357.6M311.4 318.3L311.4 333.3M311.4 333.3L306.4 333.3M306.4 333.3L306.4 357.6M339.9 318.3L339.9 357.6M373.4 318.3L373.4 357.6M418.8 322.3L418.8 357.6M464.2 318.3L464.2 343.5M464.2 343.5L469.2 343.5M469.2 343.5L469.2 359.6M501.4 317.3L501.4 359.6M-10 400.1L-3.2 400.1M-3.2 397.1L37.7 397.1M37.7 400.1L75.2 400.1M75.2 403.1L122 403.1M122 403.1L156.5 403.1M156.5 400.1L188.6 400.1M188.6 400.1L222.8 400.1M222.8 398.1L258.2 398.1M258.2 403.1L301.1 403.1M301.1 400.1L339.8 400.1M339.8 397.1L368.6 397.1M368.6 402.1L413.3 402.1M413.3 400.1L456.4 400.1M456.4 397.1L487.6 397.1M487.6 398.1L522.4 398.1M-3.2 355.6L-3.2 400.1M37.7 357.6L37.7 400.1M75.2 357.6L75.2 403.1M122 359.6L122 403.1M156.5 357.6L156.5 403.1M188.6 355.6L188.6 384.2M188.6 384.2L193.6 384.2M193.6 384.2L193.6 400.1M222.8 357.6L222.8 400.1M258.2 357.6L258.2 403.1M301.1 357.6L301.1 403.1M339.8 357.6L339.8 400.1M368.6 357.6L368.6 402.1M413.3 357.6L413.3 402.1M456.4 355.6L456.4 400.1M487.6 359.6L487.6 398.1M520.5 391.1L520.5 403.1M-10 443.9L-4.4 443.9M-4.4 443.9L37.2 443.9M37.2 445.9L65.9 445.9M65.9 441.9L98.3 441.9M98.3 446.9L142.8 446.9M142.8 443.9L180.3 443.9M180.3 440.9L215.7 440.9M215.7 446.9L255.7 446.9M255.7 440.9L288.5 440.9M288.5 443.9L323.6 443.9M323.6 443.9L360.3 443.9M360.3 446.9L398.1 446.9M398.1 446.9L431.3 446.9M431.3 443.9L472.7 443.9M472.7 446.9L513.5 446.9M513.5 441.9L531.5 441.9M-4.4 400.1L-4.4 443.9M37.2 397.1L37.2 445.9M65.9 400.1L65.9 425.1M65.9 425.1L70.9 425.1M70.9 425.1L70.9 445.9M98.3 403.1L98.3 446.9M142.8 403.1L142.8 423.8M142.8 423.8L138.8 423.8M138.8 423.8L138.8 446.9M180.3 400.1L180.3 443.9M215.7 400.1L215.7 446.9M255.7 398.1L255.7 424.2M255.7 424.2L250.7 424.2M250.7 424.2L250.7 446.9M288.5 403.1L288.5 433M288.5 433L283.5 433M283.5 433L283.5 443.9M323.6 400.1L323.6 416.5M323.6 416.5L319.6 416.5M319.6 416.5L319.6 443.9M360.3 397.1L360.3 429.6M360.3 429.6L356.3 429.6M356.3 429.6L356.3 446.9M398.1 402.1L398.1 446.9M431.3 400.1L431.3 446.9M472.7 397.1L472.7 434.1M472.7 434.1L467.7 434.1M467.7 434.1L467.7 446.9M513.5 398.1L513.5 446.9M-10 483.4L22.8 483.4M22.8 480.4L64 480.4M64 483.4L106.5 483.4M106.5 483.4L145.2 483.4M145.2 485.4L179.6 485.4M179.6 483.4L207 483.4M207 480.4L234.5 480.4M234.5 485.4L278.3 485.4M278.3 485.4L307.3 485.4M307.3 481.4L344.8 481.4M344.8 480.4L382.6 480.4M382.6 483.4L428.4 483.4M428.4 483.4L457.9 483.4M457.9 480.4L498.5 480.4M498.5 483.4L533.4 483.4M533.4 481.4L539.4 481.4M22.8 443.9L22.8 483.4M64 445.9L64 483.4M106.5 446.9L106.5 474.5M106.5 474.5L102.5 474.5M102.5 474.5L102.5 483.4M145.2 443.9L145.2 485.4M179.6 443.9L179.6 485.4M207 440.9L207 483.4M234.5 446.9L234.5 485.4M278.3 440.9L278.3 485.4M307.3 443.9L307.3 485.4M344.8 443.9L344.8 481.4M382.6 446.9L382.6 483.4M428.4 446.9L428.4 453.5M428.4 453.5L423.4 453.5M423.4 453.5L423.4 483.4M457.9 443.9L457.9 483.4M498.5 446.9L498.5 483.4M533.4 446.1L533.4 483.4M-10 523.9L1.8 523.9M1.8 521.9L31.3 521.9M31.3 518.9L73.8 518.9M73.8 518.9L104.1 518.9M104.1 521.9L138.2 521.9M138.2 518.9L183.6 518.9M183.6 518.9L230 518.9M230 521.9L266.4 521.9M266.4 519.9L313 519.9M313 521.9L358.7 521.9M358.7 524.9L405 524.9M405 523.9L438.7 523.9M438.7 518.9L483.1 518.9M483.1 521.9L518.6 521.9M518.6 519.9L547.4 519.9M1.8 483.4L1.8 523.9M31.3 480.4L31.3 521.9M73.8 483.4L73.8 510.7M73.8 510.7L77.8 510.7M77.8 510.7L77.8 518.9M104.1 483.4L104.1 521.9M138.2 483.4L138.2 521.9M183.6 483.4L183.6 518.9M230 480.4L230 521.9M266.4 485.4L266.4 494.1M266.4 494.1L261.4 494.1M261.4 494.1L261.4 521.9M313 481.4L313 499.8M313 499.8L308 499.8M308 499.8L308 521.9M358.7 480.4L358.7 524.9M405 483.4L405 524.9M438.7 483.4L438.7 523.9M483.1 480.4L483.1 521.9M518.6 483.4L518.6 521.9M-10 564.3L7.6 564.3M7.6 561.3L45.3 561.3M45.3 562.3L72.5 562.3M72.5 567.3L109.1 567.3M109.1 562.3L141.5 562.3M141.5 566.3L182.1 566.3M182.1 566.3L221.7 566.3M221.7 564.3L253.7 564.3M253.7 564.3L297 564.3M297 564.3L341.7 564.3M341.7 566.3L379.8 566.3M379.8 561.3L410.7 561.3M410.7 564.3L454.1 564.3M454.1 566.3L498.5 566.3M498.5 564.3L539.6 564.3M539.6 567.3L556.3 567.3M7.6 521.9L7.6 564.3M45.3 518.9L45.3 562.3M72.5 518.9L72.5 567.3M109.1 521.9L109.1 567.3M141.5 518.9L141.5 566.3M182.1 518.9L182.1 566.3M221.7 518.9L221.7 566.3M253.7 521.9L253.7 564.3M297 519.9L297 535.1M297 535.1L292 535.1M292 535.1L292 564.3M341.7 521.9L341.7 566.3M379.8 524.9L379.8 566.3M410.7 523.9L410.7 564.3M454.1 518.9L454.1 536.4M454.1 536.4L459.1 536.4M459.1 536.4L459.1 566.3M498.5 521.9L498.5 566.3M539.6 519.9L539.6 567.3M-10 595.9L2.6 595.9M2.6 597.9L40.7 597.9M40.7 599.9L85 599.9M85 594.9L117.9 594.9M117.9 597.9L146.5 597.9M146.5 600.9L193.3 600.9M193.3 599.9L235.5 599.9M235.5 595.9L282.1 595.9M282.1 599.9L314 599.9M314 599.9L352.4 599.9M352.4 597.9L385.8 597.9M385.8 597.9L421.5 597.9M421.5 597.9L468.3 597.9M468.3 597.9L513.5 597.9M513.5 597.9L552.1 597.9M552.1 597.9L562.6 597.9M2.6 564.3L2.6 581.9M2.6 581.9L7.6 581.9M7.6 581.9L7.6 597.9M40.7 561.3L40.7 599.9M85 567.3L85 599.9M117.9 562.3L117.9 597.9M146.5 566.3L146.5 577.6M146.5 577.6L151.5 577.6M151.5 577.6L151.5 600.9M193.3 566.3L193.3 600.9M235.5 564.3L235.5 599.9M282.1 564.3L282.1 599.9M314 564.3L314 584.9M314 584.9L309 584.9M309 584.9L309 599.9M352.4 566.3L352.4 589.2M352.4 589.2L348.4 589.2M348.4 589.2L348.4 599.9M385.8 561.3L385.8 577M385.8 577L381.8 577M381.8 577L381.8 597.9M421.5 564.3L421.5 585.2M421.5 585.2L417.5 585.2M417.5 585.2L417.5 597.9M468.3 566.3L468.3 597.9M513.5 564.3L513.5 589.2M513.5 589.2L517.5 589.2M517.5 589.2L517.5 597.9M552.1 567.3L552.1 597.9M-10 635.3L12 635.3M12 637.3L39 637.3M39 639.3L73.9 639.3M73.9 634.3L102.2 634.3M102.2 637.3L132.1 637.3M132.1 637.3L160.8 637.3M160.8 637.3L192.9 637.3M192.9 637.3L230.7 637.3M230.7 637.3L269.2 637.3M269.2 640.3L298.6 640.3M298.6 635.3L307.8 635.3M320.4 635.3L336.7 635.3M336.7 635.3L366.5 635.3M366.5 634.3L376.6 634.3M379 634.3L386.3 634.3M390 634.3L410.3 634.3M410.3 639.3L424.1 639.3M428.9 639.3L445.8 639.3M445.8 637.3L474.2 637.3M474.2 640.3L518.5 640.3M518.5 637.3L561.8 637.3M561.8 634.3L563.8 634.3M12 597.9L12 607.8M12 607.8L17 607.8M17 607.8L17 637.3M39 597.9L39 639.3M73.9 599.9L73.9 639.3M102.2 594.9L102.2 637.3M132.1 597.9L132.1 637.3M160.8 600.9L160.8 610.2M160.8 610.2L156.8 610.2M156.8 610.2L156.8 637.3M192.9 600.9L192.9 637.3M230.7 599.9L230.7 608.3M230.7 608.3L234.7 608.3M234.7 608.3L234.7 637.3M269.2 595.9L269.2 640.3M298.6 599.9L298.6 640.3M336.7 599.9L336.7 635.3M366.5 597.9L366.5 635.3M410.3 597.9L410.3 639.3M445.8 597.9L445.8 606.9M445.8 606.9L440.8 606.9M440.8 606.9L440.8 639.3M474.2 597.9L474.2 640.3M518.5 597.9L518.5 611.5M518.5 611.5L514.5 611.5M514.5 611.5L514.5 640.3M561.8 597.9L561.8 637.3M-10 675.3L-2.2 675.3M-2.2 672.3L32.2 672.3M32.2 669.3L67.8 669.3M67.8 674.3L109.9 674.3M109.9 672.3L155.1 672.3M155.1 672.3L191.6 672.3M484.5 672.3L485 672.3M496.9 674.3L516.2 674.3M516.2 672.3L562.7 672.3M-2.2 635.3L-2.2 675.3M32.2 637.3L32.2 672.3M67.8 639.3L67.8 674.3M109.9 637.3L109.9 650.2M109.9 650.2L104.9 650.2M104.9 650.2L104.9 674.3M155.1 637.3L155.1 646.2M155.1 646.2L150.1 646.2M150.1 646.2L150.1 672.3M200.7 637.3L200.7 666.9M230 637.3L230 651.9M275.8 640.3L275.8 652.9M322 635.3L322 644.5M364.1 635.3L364.1 654.4M406.3 634.3L406.3 647.6M450.8 637.3L450.8 639.8M450.8 648.8L450.8 654.4M488.7 640.3L488.7 659M488.7 664.1L488.7 670.8M516.2 640.3L516.2 674.3M562.7 634.3L562.7 650.5M-10 705.3L6.2 705.3M16.1 701.3L17.3 701.3M30.1 701.3L57.9 701.3M57.9 703.3L91 703.3M91 706.3L122.8 706.3M122.8 703.3L154.8 703.3M154.8 703.3L185.6 703.3M185.6 706.3L191.1 706.3M515.5 703.3L541.6 703.3M546.6 703.3L555 703.3M555 705.3L556.2 705.3M16.1 672.3L16.1 685.2M16.1 685.2L21.1 685.2M21.1 685.2L21.1 698.7M57.9 669.3L57.9 703.3M91 674.3L91 693.8M91 693.8L87 693.8M87 693.8L87 706.3M122.8 672.3L122.8 706.3M154.8 672.3L154.8 703.3M185.6 672.3L185.6 680.2M180.6 688.9L180.6 706.3M513.4 674.3L513.4 696.5M555 672.3L555 691.9M555 691.9L550 691.9M550 691.9L550 705.3M-10 745.3L6.2 745.3M79.6 742.3L84.3 742.3M90.5 742.3L103.7 742.3M104.5 742.3L111.6 742.3M111.6 744.3L115.6 744.3M124.6 744.3L129.7 744.3M140.3 744.3L144.1 744.3M144.1 739.3L179.5 739.3M179.5 739.3L210.1 739.3M68.5 703.3L68.5 719.9M68.5 719.9L63.5 719.9M63.5 719.9L63.5 727M111.6 706.3L111.6 712.8M111.6 712.8L106.6 712.8M106.6 712.8L106.6 743.6M144.1 703.3L144.1 744.3M179.5 703.3L179.5 734.3M179.5 734.3L175.5 734.3M175.5 734.3L175.5 739.3M532.3 703.3L532.3 709.3M-10 779.6L6.2 779.6M93.6 779.6L124.7 779.6M124.7 777.6L158.9 777.6M216.2 782.6L240.2 782.6M124.7 744.3L124.7 744.4M129.7 760L129.7 779.6M168.1 739.3L168.1 751.9M214.7 740.1L214.7 760.3M-10 819.4L18.5 819.4M18.5 819.4L47.2 819.4M47.2 821.4L75.6 821.4M75.6 818.4L117.8 818.4M117.8 821.4L149.8 821.4M149.8 824.4L194.5 824.4M194.5 824.4L230.9 824.4M230.9 823.4L265.5 823.4M265.5 821.4L296.7 821.4M296.7 821.4L333.9 821.4M333.9 821.4L365.4 821.4M365.4 819.4L396 819.4M396 821.4L438.7 821.4M438.7 821.4L473.4 821.4M473.4 819.4L520.1 819.4M520.1 821.4L563.1 821.4M18.5 803.1L18.5 819.4M43.2 803.1L43.2 821.4M79.6 803.1L79.6 821.4M117.8 779.6L117.8 821.4M149.8 777.6L149.8 824.4M194.5 803.1L194.5 803.8M194.5 803.8L198.5 803.8M198.5 803.8L198.5 824.4M230.9 782.6L230.9 824.4M265.5 806.8L265.5 823.4M292.7 806.8L292.7 821.4M333.9 806.8L333.9 821.4M360.4 806.8L360.4 821.4M396 806.8L396 821.4M438.7 806.8L438.7 821.4M473.4 806.9L473.4 821.4M515.1 806.9L515.1 821.4M-10 854.7L23.9 854.7M23.9 853.7L67.3 853.7M67.3 851.7L96 851.7M96 848.7L134.6 848.7M134.6 853.7L175.9 853.7M175.9 848.7L214 848.7M214 851.7L243.3 851.7M243.3 851.7L275.8 851.7M275.8 848.7L318 848.7M318 851.7L355.9 851.7M355.9 848.7L390.6 848.7M390.6 854.7L434 854.7M434 849.7L461.6 849.7M461.6 849.7L506.2 849.7M506.2 853.7L552.6 853.7M552.6 848.7L562.8 848.7M23.9 819.4L23.9 854.7M67.3 821.4L67.3 836.7M67.3 836.7L62.3 836.7M62.3 836.7L62.3 853.7M96 818.4L96 851.7M134.6 821.4L134.6 853.7M175.9 824.4L175.9 853.7M214 824.4L214 831.7M214 831.7L219 831.7M219 831.7L219 851.7M243.3 823.4L243.3 851.7M275.8 821.4L275.8 851.7M318 821.4L318 851.7M355.9 821.4L355.9 851.7M390.6 819.4L390.6 842M390.6 842L395.6 842M395.6 842L395.6 854.7M434 821.4L434 854.7M461.6 821.4L461.6 836.7M461.6 836.7L466.6 836.7M466.6 836.7L466.6 849.7M506.2 819.4L506.2 853.7M552.6 821.4L552.6 853.7M-10 26.2L-3.3 26.2M-3.3 23.2L29.4 23.2M29.4 25.2L63.6 25.2M63.6 21.2L106.9 21.2M106.9 25.2L137.7 25.2M137.7 25.2L159.9 25.2M-3.3 -10L-3.3 14.7M-3.3 14.7L-8.3 14.7M-8.3 14.7L-8.3 26.2M29.4 -10L29.4 25.2M63.6 -10L63.6 25.2M106.9 -10L106.9 25.2M137.7 -10L137.7 25.2M-10 51.2L-9.3 51.2M-9.3 50.2L29.5 50.2M29.5 53.2L68 53.2M68 50.2L106.1 50.2M106.1 51.2L152.1 51.2M152.1 50.2L158.8 50.2M-9.3 26.2L-9.3 41.2M-9.3 41.2L-14.3 41.2M-14.3 41.2L-14.3 51.2M29.5 25.2L29.5 38M29.5 38L25.5 38M25.5 38L25.5 53.2M68 21.2L68 32.9M68 32.9L64 32.9M64 32.9L64 53.2M106.1 21.2L106.1 51.2M152.1 25.2L152.1 51.2M-10 90.9L6.8 90.9M6.8 88.9L44.6 88.9M44.6 88.9L72.6 88.9M72.6 88.9L101.1 88.9M101.1 85.9L139.2 85.9M139.2 85.9L159.7 85.9M6.8 50.2L6.8 90.9M44.6 53.2L44.6 88.9M72.6 50.2L72.6 68.1M72.6 68.1L68.6 68.1M68.6 68.1L68.6 88.9M101.1 50.2L101.1 88.9M139.2 51.2L139.2 78.1M139.2 78.1L143.2 78.1M143.2 78.1L143.2 85.9M-10 129.6L11.4 129.6M11.4 132.6L46.6 132.6M46.6 134.6L92.1 134.6M92.1 129.6L125.2 129.6M125.2 132.6L157.5 132.6M157.5 130.6L159.5 130.6M11.4 88.9L11.4 111.1M11.4 111.1L16.4 111.1M16.4 111.1L16.4 132.6M46.6 88.9L46.6 101.2M46.6 101.2L50.6 101.2M50.6 101.2L50.6 134.6M92.1 88.9L92.1 116.9M92.1 116.9L97.1 116.9M97.1 116.9L97.1 134.6M125.2 85.9L125.2 97.9M125.2 97.9L121.2 97.9M121.2 97.9L121.2 132.6M157.5 85.9L157.5 132.6M-10 170.2L-6.4 170.2M-6.4 168.2L37.4 168.2M37.4 171.2L70.3 171.2M70.3 168.2L112.7 168.2M112.7 166.2L145.7 166.2M145.7 168.2L159.9 168.2M-6.4 129.6L-6.4 170.2M37.4 132.6L37.4 171.2M70.3 134.6L70.3 171.2M112.7 129.6L112.7 168.2M145.7 132.6L145.7 168.2M-10 202L-4.6 202M-4.6 204L35.2 204M35.2 205L71.1 205M71.1 202L104.9 202M104.9 202L133 202M133 202L159.7 202M-4.6 168.2L-4.6 204M35.2 168.2L35.2 205M71.1 168.2L71.1 205M104.9 168.2L104.9 202M133 166.2L133 202M-10 239.1L21.2 239.1M21.2 239.1L67.2 239.1M67.2 239.1L111.5 239.1M111.5 239.1L145.8 239.1M145.8 236.1L159.9 236.1M21.2 204L21.2 239.1M67.2 205L67.2 239.1M111.5 202L111.5 239.1M145.8 202L145.8 239.1" fill="none" stroke="#606362" stroke-width="1"/>
<path d="M182.3 6.2L189.7 14.8L197 34.5L200 41.9 M200 93.6L192.1 108.4L184.7 130.5L174.9 152.7L162.6 172.4L150.2 194.6L147.8 200L146.6 207.4L150.2 217.2L160.1 224.6 M240.6 6.9L229.6 19.7L228.3 36.9L227.1 53L214.8 64L204.9 71.4L200 76.4 M240.6 6.9L253 22.2L261.6 39.4L264 51.7L273.9 57.9L286.2 60.3L298.5 54.2L308.4 53L318.2 59.1L328.1 66.5L340.4 76.4L352.7 85L365 96.1L377.3 105.9L389.7 115.8L400 121.9L404.9 137.9L419.7 152.7L434.5 170L446.8 184.7L459.1 200L461.6 200L471.4 212.3L481.3 227.1L491.1 233.3L505.9 238.9 M214.8 200L224.6 189.7L236.9 183.5L261.6 176.1L286.2 167.5L310.8 161.3L335.5 160.1L347.8 155.2L367.5 147.8L379.8 142.9L400 140.4L400 137.9L436.9 133L461.6 136.7L486.2 137.9L510.8 136.7L523.2 142.9L537.9 152.7L552.7 158.9L572.4 157.6L587.2 161.3L600 157.6L600 157.7L615.5 148.7L631 150L646.5 148.7L659.5 142.2L667.2 134.5L682.8 126.7L703.4 116.4L724.1 106L744.8 95.7L765.5 86.6L786.2 80.2L806.1 72.4 M200 69L201.2 91.1 M400 99.8L414.8 101L429.6 105.9L436.9 115.8L436.9 133L432 147.8L424.6 157.6L412.3 162.6L400 163.8L400 163.8L387.2 157.6L374.9 147.8L367.5 133L370 118.2L379.8 105.9L392.1 101L400 99.8 M472.7 6.2L471.4 19.7L466.5 36.9L456.7 51.7L436.9 59.1L432 71.4L424.6 86.2L417.2 98.5L409.9 110.8L407.4 128.1L404.9 137.9L402.5 157.6L401.2 172.4L400 200 M397 200L394.6 224.6L394.6 249.3L395.8 273.9L397 298.5 M600 157.6L587.2 172.4L573.6 187.2L560.6 200L560.1 200L547.8 214.8L533 227.1L523.2 236.9 M588.4 6.2L587.2 22.2L594.6 34.5L600 39.4L600 44L603.9 51.7L602.6 67.2L600 87.9L590.5 110L600 124.1L610.3 139.6L615.5 148.7 M659.5 142.2L672.4 155.2L682.8 170.7L685.3 181L698.3 190.1L716.4 188.8L742.2 183.6L768.1 177.1L796.5 172L806.1 174.6 M716.4 188.8L721.5 199.1L726.7 210L721.5 200L734.5 212.9L747.4 218.1L757.7 233.6L762.9 256.9L770.7 280.2 M6.2 257.1L36.9 255.4L61.6 251.7L86.2 243.1L110.8 234.5L135.5 224.6L160.1 224.6L161.3 223.4L167.5 221.7L173.6 223.4L175.4 228.3L171.2 231.5L162.6 230.8L160.1 227.1 M175.4 224.6L187.2 217.2L200 208.6L200 208.6L209.9 202.5L214.8 200L214.8 200 M165 230.8L167.5 249.3L170 273.9L172.4 298.5L174.9 323.2L177.3 347.8L182.3 367.5L183.5 382.3L181 400L177.3 400L172.4 412.3L163.8 424.6L160.1 444.3L155.2 461.6L150.2 473.9L147.8 478.8L152.7 481.3L142.9 498.5L135.5 518.2L130.5 540.4L129.3 572.4L128.1 600L126.8 600L126.8 624.6L129.3 639.4L134.2 651.7L133 673.9 M6.2 460.3L24.6 462.1L49.3 465.3L73.9 469L91.1 475.1L103.4 473.9L123.2 472.7L137.9 473.4L147.8 478.8L152.7 481.3L172.4 479.3L200 475.1L200 475.9L224.6 475.1L249.3 473.9L261.6 472.7L281.3 466.5L291.1 457.9L301 444.3 M498.5 358.9L523.2 353.9L547.8 350.2L572.4 347.8L582.3 352.7 M478.8 293.6L488.7 276.4L496.1 261.6L498.5 249.3L503.4 240.6L507.1 238.2 M257.9 473.9L249.3 491.1L244.3 505.9L236.9 518.2L234.5 530.5L219.7 545.3L214.8 562.6L214.8 577.3L209.9 592.1L206.2 600L200 607.4L194.6 622.2L189.7 641.9L187.2 649.3L182.3 661.6L172.4 673.9L160.1 685 M505.9 238.9L513.3 235.7L523.2 236.9L533 249.3L537.9 264L542.9 281.3L547.8 293.6L555.2 308.4L567.5 323.2L577.3 337.9L582.3 352.7 M583.5 294.8L577.3 305.9L572.4 320.7L570 328.1L577.3 337.9 M583.5 344.1L589.7 346.6L592.1 352.7L589.7 360.1L583.5 362.6L577.3 360.1L574.9 352.7L577.3 346.6L583.5 344.1 M583.5 347.8L592.1 337.9L600 328.1L600 331.9L612.9 321.5L631 313.8L651.7 303.4L664.6 295.7L677.6 287.9L690.5 281.5L708.6 273.7L724.1 262.1L739.6 254.3L755.2 244L768.1 236.2L786.2 228.4L806.1 222 M739.6 254.3L744.8 267.2L760.3 277.6L781 287.9L796.5 303.4L806.1 308.6 M587.2 355.2L600 357.6L600 353.9L615.5 360.3L638.8 362.9L664.6 368.1L690.5 369.4L716.4 370.7L742.2 373.3L755.2 372L768.1 362.9L786.2 352.6L806.1 339.6 M582.3 357.6L573.6 372.4L561.3 387.2L549 400L547.8 400L545.3 407.4L537.9 414.8L525.6 428.3L518.2 436.9L510.8 449.3L498.5 456.7 M584.7 360.1L594.6 372.4L600 382.3L600 378.4L607.8 396.5L612.9 410L607.8 400L615.5 410.3L625.9 419.4L632.3 428.4L633.6 436.2L631 451.7L629.7 477.6L629.7 498.3L633.6 519L641.4 534.5L647.8 547.4L651.7 565.5L655.6 581L659.5 596.5L662.1 610L659.5 600L664.6 612.9L677.6 628.4L690.5 644L703.4 656.9L713.8 662.1L716.4 677.6L721.5 695.7L731.9 713.8L742.2 729.3L747.4 744.8L750 765.5L753.9 791.4L755.2 806.9 M625.9 419.4L638.8 428.4L646.5 441.4L664.6 451.7L682.8 459.5L708.6 465.9L734.5 469.8L760.3 473.7L781 481.5L799.1 486.6L806.1 493.1 M806.1 534.5L801.7 544.8L799.1 560.3L793.9 575.8L787.5 591.4L784.1 610L784.9 600L786.2 620.7L787.5 638.8L778.4 655.6L781 664.6L791.4 667.2L796.5 677.6L801.7 690.5L806.1 698.3 M787.5 638.8L792.7 651.7L791.4 667.2 M424.6 503.4L414.8 520.7L400 544.1L400 542.9L389.7 555.2L377.3 567.5L360.1 579.8L342.9 592.1L323.2 600L323.2 600L315.8 603.7L308.4 612.3L305.9 627.1 M6.2 660.3L24.6 655.4L44.3 649.3L66.5 643.8L86.2 645.6L93.6 656.7L103.4 666.5L118.2 671.4L133 673.9L147.8 681.3L160.1 685 M86.2 645.6L103.4 641.9L128.1 639.9L147.8 640.6L167.5 646.8L182.3 653L200 656.7L200 653L224.6 646.8L249.3 643.1L269 648L286.2 639.4L298.5 634.5L305.9 627.1L312.1 623.4L328.1 624.6L347.8 629.6L357.6 632L370 636.9L382.3 635.7L400 624.6L400 623.4L414.8 618.5L429.6 619.7L444.3 616.7L461.6 620.9L478.8 615.3L498.5 616.7L515.8 616L528.1 620.9L547.8 627.1L567.5 634.5L582.3 639.4L600 638.2L600 640.1L625.9 642.7L651.7 646.5L677.6 651.7L698.3 658.2L713.8 662.1L734.5 662.1L755.2 658.2L778.4 655.6L791.4 655.6 M6.2 617.2L12.3 627.1L13.5 639.4L11.1 649.3L14.8 660.3 M396.1 300L398.5 314.8L399.8 336.9L402.2 356.7L404.7 371.4L405.4 381.3L403.4 393.6L408.4 408.4L415.8 423.2L423.2 437.9L430.5 457.6L439.2 470L434.2 487.2L426.8 500 M364 397.3L381.3 386.2L391.1 376.4L398.5 371.4L408.4 367.7L415.8 366.5 M405.4 381.3L410.8 373.9L415.8 366.5L428.1 364L442.9 363.5L462.6 364.5L482.3 361.6L500 359.1 M415.8 366.5L423.2 351.7L437.9 339.4L452.7 329.6L460.1 317.2L467.5 307.4L472.4 300 M439.2 470L447.8 472.4L462.6 470L477.3 465L492.1 457.6L500 453.9 M300 446.6L312.3 433L324.6 420.7L336.9 408.4L349.3 401L364 397.3L376.4 393.6L388.7 386.2L398.5 383.7L405.4 381.3 M584.7 345.3L586.7 333L589.2 318.2L593.3 305.9" fill="none" stroke="#90760f" stroke-width="1"/>
<path d="M249.2 679.1L253.1 685L254.5 692.9L253.1 702.7L248.2 712.6L240.3 722.4L232.4 730.3 M246.2 694.8L248.2 697.8L245.2 700.8L242.3 698.8 M228.3 662.9L235.7 662.3L233.2 664.8 M241.9 664.2L250.5 662.3 M257.9 661.1L264 662.3L273.9 663.6L286.2 664.8 M304.6 658.6L308.3 661.1L306.5 664.2 M507.1 694.3L506.6 698.8L507.7 704.6L509.4 709.1L511.1 712.5L512.8 711.4 M523.1 712.5L527.7 716L532.3 713.7L531.1 716.5L534 719.4L539.1 718.3L547.1 713.7L554 710.3L559.7 705.1 M563.1 702.3L570 698.8" fill="none" stroke="#000" stroke-width="1.3"/>
<path d="M6.2 105.2L155.2 105.2L156.4 110.8L161.3 114.5L160.1 121.9L156.4 128.1L147.8 137.9L141.6 145.3L137.9 149L187.2 149 M201.4 8.4L200.6 7.7L201.2 7L203.6 9.6L205.8 11.7L206 10.6L205.1 10.6L204.4 14.3L203.7 17L203 15.9L203.9 15.7L206.8 18.3L208.7 19.5L208.4 18.1L207.6 18.9L207.3 22.7L206.7 25L205.9 24L207.4 22.5L207.9 25.6L207.3 28.8L208.3 28.7L208.5 27.6L205.9 28.5L202.4 30L201.5 29.6L202.6 28.7L202.1 30.6L203.7 34.3L205.1 35.4L204.1 34.8L203.8 35.2L203.3 37.2L202.8 39.6L202.3 40.6L202.2 40.5L202.5 41.3L204.1 42.6L206.2 43.8L207.2 44.2L207.2 44L207.1 44.6L207.8 46.6L208.6 48.8L208.8 49.8L206.8 48.7L210 50.2L213.4 52.8L213.1 50.5L211.7 52L210.7 57.1L209.3 56.4L209.8 56L214.9 57.1L216.4 55.9L214.1 55.3L216 59.1L217.2 62.4L214.9 61.2L217.6 60.8L220.3 58.6L220.4 57.8L219.9 58.3L222.1 58.6L225.1 58.7L225.9 59L225.5 58.9L225.8 56.7L226.4 53.8L225.9 53.4L225.9 54.1L228 52.8L228.6 55.5L228.1 55.8L228.1 55.2L229.3 55.9L231.6 57.7L233.5 58.9L234.2 59.7L234 59.8L233.5 59.8L232.4 61.4L231 64.1L229.8 66.1L229.1 66.5L229.1 65.9L229.6 66.1L230.6 67.8L229.8 70.6L229 72.8L229.1 73.5L229.6 73.1L228.9 72.9L226.3 73.4L226.7 76.3L226.9 78L226.4 77.9L226.4 77.4L227.8 77.8L230.5 79.3L232.1 81.6L231 83L231.5 82.5L230.9 82.3L228.8 83.3L226.3 84.7L224.9 85.3L224.6 85.4L224.8 86L225.4 87.9L225.9 90.4L226.5 91.8L226.7 91.7L226.3 91.8L225.3 93.4L224.1 95.8L223 96.2L223.2 95.2L223.2 95.5L222 97L219.7 99.7L217.3 100.6L217.2 100L218.3 100.1L217.6 97.4L216.2 93.5L216.1 91.5L217.3 92.2L217.4 93.2L214.4 91.7L213.1 95.3L213.6 97.1L214.6 96.1L214.5 95L212 96.2L208.6 98.5L207.1 99.2L207.3 98.2L208.3 98.3L209.3 101.6L210.4 105L211.3 105.2L211.4 103.7L210.6 105.3L206.7 106.1L203.9 105.7L204.4 104.8L205.6 104.9L204.2 106.9L202.5 110.2L203.6 110.4L203.8 110.4L203.5 110.5L202.9 112.1L202.1 114.4L201.4 115.7L201.3 115.2L201.6 115.1L201 116.6L199.8 118.9L199.5 119.6L199.4 119.9L199.3 119.7L197.9 119.5L195.8 120.4L193.2 121.4L192.9 120.8L193.6 120.2L193.8 121.3L193 124.3L192.2 127.2L192.5 128.1L193.3 127.4L192.8 126.9L190.2 127.6L189.3 130.7L188.7 132.2L188.1 131.5L188.4 130.8L189.8 132L191.8 134.6L192.7 135.4L192.6 135L192.2 136.1L191.6 138.5L190.3 139L190.4 138.6L190.6 139.6L190.4 142.1L190.5 143.7L190.7 143.4L190 143.7L188.1 145.4L186.7 146.4L186.7 146L185.8 146L186.7 148.1L188.5 150.5L189.9 152L190.3 151.7L190 151.1L189.5 151.8L189 154.4L188.6 157.3L188 158.5L187.8 156.6L189.1 155.9L188.4 157.5L186.7 160L185.4 162.2L185.7 163.7L186.9 162.8L186 162.2L182.5 162.6L178.9 163.2L177.7 162.7L178.9 161.6L179.6 162.1L178.5 164.9L176.7 168.3L176.4 170.1L177.7 169.7L178 168.6L175.6 168.7L171.7 169.5L169.2 170.6L169.2 170.6L169.9 169.3L170.9 170.9L171.7 174.8L172.6 177.7L173.6 177.5L173.8 175.8L172.5 176.1L170.1 179L169 182.5L169.8 183.6L168.7 182.6L169.5 181.9L172.8 183L176.7 184.2L177.5 185.8L176.9 186.2L174.7 185.9L170.3 186.6L168.4 186.1L169.7 185L170.2 186.1L168.1 189.8L166.9 192.6L168.2 192.5L168.6 191.4L165.2 191.5L161.2 192L160.6 191L162.1 190.1L161.8 192.1L160.4 196.3L163.3 197.2L163.3 195.4L162.2 195.1L161.1 198.9L159.9 202.7L158.8 198.2L160.4 197.4L160.1 199.7L158.1 203.9L157.9 206.1L159.5 205.2L159.1 204.2L155.4 204.7L155.8 206.9L156 208.2L155.9 208.5L156.1 208.5L157.2 209.1L159 210.5L160.7 211.8L161.5 212.8L161.3 213.3L160.9 213.5L159.9 214.8L158.6 216.7L157.6 218.1L157.2 218.4L157.4 217.7L158.1 220.1L158.7 222.7L159.1 221.5L158.1 221.5L159.2 224.5L159.5 226.2L158.8 225.5L161.1 225.1L159.2 227.1L159.1 227.8L159.5 227.3L156.8 226.4L154.5 225.5L155.2 225.2L155.2 225.3L153.2 226.2L151.8 228.7L151.1 230.7L151.3 231.3L151.7 230.8L151.1 230.6L149.1 231.4L146.4 232.5L144.6 233.1L144.2 232.8L144.3 232.6L144.3 233.4L144.3 235.8L144 238.7L144.1 240.3L144.6 238.9L143.4 238.1L144.2 239.8L145.7 242.3L146.3 243.8L145.8 243.8L146.1 242.1L147.2 243.3L147.2 246.3L147.5 247.9L147.9 247.7L147.5 247.5L146 249.2L143.1 249.3L141.4 248.8L142.1 248.3L142.1 249L140.1 250.9L137.9 252.9L137 253.5L137.1 253.3L136.8 252L135 249.5L133.9 247.5L134.5 247.4L134.8 248L132.2 247.3L132.2 250.4L132.9 251.6L133.6 250.5L132.5 250.8L130.2 254L128.5 255.7L128.7 253.9L129.9 253.9L128.8 257.3L127.9 260.3L128.8 260.4L129 259.4L125.9 260L125.4 263.5L124.6 263.8L124.4 262.6L126.4 263.8L129.3 266.6L129.6 269.4L128.3 269.5L128.9 268.5L126 267.5L122 266.6L120 267.5L120.3 267.8L121.3 267.4L123 270.4L124.8 274L126 274.4L125.6 272L124.3 272.1L124.2 275.9L124.1 279.6L123.2 280.4L122.8 277.5L124.7 276.7L124.5 280.2L124.3 284.1L124.9 285.2L126 283.9L125.4 283.1L122.4 284.4L121.1 288.2L120 289.5L119.4 288.1L120.1 287.3L122 289.4L124.3 292.7L124 295.7L122.6 295.8L123.8 295.1L122.7 294.3L118.9 293.8L115.3 293.2L114.2 292.4L113.9 292.3L113.9 292.9L114.5 295.5L114.2 299.8L111.5 301.4L112 302.1L113.6 301.7L111.7 300L109.4 299.6L107 299.6L106.1 300L106.4 299.7L106.4 300.4L105.6 302.4L104.6 304.6L104.5 305.6L104.7 305.6L103.9 305.6L101.8 305.7L99.2 305.9L98 305.8L97.1 306.4L95.9 307.7L98.3 308.2L102 309.6L104.6 310.1L104.8 309.2L103.6 308.2L105.9 310.4L102.8 312.6L99 312.1L97.4 311.3L98.4 310.5L99.5 310.7L98.5 312.4L96.2 315.3L99.5 316.4L99.6 316.1L99.2 315.3L98.7 315.6L98.8 317.9L99.2 321L98.1 322.5L97 321.2L97.4 320.6L97.9 321.4L97.8 324.1L96.8 327.2L95.1 328.2L95.6 328.5L96.1 328L94.8 327.5L91.7 327.1L89.4 326.8L88.7 326.5L88.6 326.4L88.1 327.3L87.2 329.5L86.3 331.7L86.1 332.8L86.4 331L85.2 330.7L86.7 332.2L88.7 334L89.6 335.1L89.3 335.2L89.5 333.4L90.5 333.8L90.1 337.1L90 339.5L90.5 339.8L90.9 339L89.9 339.1L87.6 340.8L85 342.7L84.5 344.8L85.5 345.2L85.3 344.6L87.1 344.7L90.3 345.4L92.7 345.8L92.9 348.1L91.1 347.7L89.5 347.2L86.9 346.5L86.1 346L86.5 346.1L85.2 347.1L82.8 348.4L82.9 349.1L83.6 348.2L82.6 349.3L81.2 351.6L80.3 352.3L80.5 351.8L80.6 353.5L83.3 354.1L86.4 353.2L85.6 352.3L84.3 352.3L85.1 354L86.9 356.7L84.5 353.6L84.6 352.5L86 352.8L86.1 353.7L83.3 354.5L79.2 355.1L76.9 355.9L78.9 357L81.4 355.3L80.1 355L75 356.4L73 356L73.1 355.3L75.1 358.2L78.9 360.3L78.8 358.4L77.4 358.7L77.7 363.7L76.7 365.4L76.7 361.6L78.2 364.2L77.6 368.5L79.2 367.7L78.3 366.7L73.7 368.8L73 369.1L72.6 369.2L73.1 370.3L74.8 372.2L76.4 373.9L76.8 373.8L76.4 373.7L76.2 375.8L76.9 378.5L78.4 378.5L77.9 378.5L78.8 377.6L81.2 376.2L82.7 375.2L82.4 375L81.6 374.9L85.2 376.6L83.6 379.6L82.7 378.3L83.5 377.5L86 380.4L88.3 383L88.8 383L88.2 382.9L84.5 383.9L80.9 384.9L81 383.7L82.3 383.5L81.3 387L83.6 390.1L82.9 389.6L82.9 389.6L82.7 390.3L82.3 392.1L82 394.3L82.7 396L84 395.5L83.9 395.4L84.7 394.7L86.4 393.5L88.5 393.5L87.9 395.4L88 395.4L87.7 395.6L86.7 396.7L85.1 398.5L84 399.6L83.8 399.6L85.1 398.6L84.3 400L83 402.1L82.2 403.5L82.3 403.8L82 403.7L80.3 404.1L78.2 405.5L79 407.2L78.9 407.3L79.3 407.4L80.8 408.4L83 410L84.5 410.8L84.6 410.4L85.4 411.2L84 412.9L81.2 413.8L79.1 414.3L78.8 413.9L79.2 413.8L78.9 415L77.6 417.5L78.3 419.9L78.8 420.3L78.9 419.7L78.1 420.2L76.9 422L76.2 425.8L78.4 427.1L77.2 427.1L76.4 426.2L78.1 425.6L82 425.4L84.3 423.5L81.8 422L80.8 423.2L81.1 424L83.5 423.1L87 421.2L87.2 424.1L83 422.5L83.5 420.7L84.8 422.3L86.4 426.7L87.8 429L88.5 427.6L87.9 426.4L85.7 429L82.7 432.1L81 430.6L82.5 429.1L83.3 430L82 434.1L81.2 437.6L82.4 437.7L83.2 434.5L80.4 436.1L79.7 438.7L79.1 439.5L79.2 439L80.1 440.1L81.4 442.5L82.2 443.3L82.1 442.9L81.5 443.9L80.8 446.5L80.7 448.2L81 448.1L81.9 447.9L84.6 448.4L86.2 448.4L86.1 448.3L86.1 448.7L87.2 450.1L88.7 452L89.3 453.1L89.2 453.2L90.2 452L90.3 453.4L89.1 455.4L88.6 456.5L88.7 456.5L88 456.5L86 457.2L84 458.4L83.8 459.6L83.3 458.7L84.5 460.3L86.1 463.6L87 463.7L86.6 462.7L85 465L87.4 467.1L86.8 467.6L86.4 466.9L89.5 465.9L92 464.8L91.1 464.3L91.9 464.8L92.8 468.4L92.3 470.3L92.3 469.6L92.8 469.6L94.4 470.9L96.3 472.6L97.3 473.2L96.1 472.4L95.9 472.9L98.3 473L100.3 473.9L98.1 474.2L98.1 473.9L98.5 474.4L98.9 476.6L99.3 479L99.2 480.2L100.7 480.2L96.9 480L92.6 480L94.2 478.3L94.6 480.1L92.1 484.8L93.2 485.7L94 484.5L89.1 483.6L86.8 482.1L89.4 481.5L87.7 484.2L84.5 487.5L86.6 487.8L86.4 486.3L81.8 485.2L79.6 483.9L80.1 483.3L80.2 484.6L80.7 489.3L81.5 492.4L82.7 490.8L81.8 489.9L78.7 493L81.6 495.6L79.8 495.8L79.1 494.6L83.2 493.6L87.1 492.5L86.2 491.3L85.5 492.5L85.9 494.2L88.3 494L90.7 493.1L91.7 493L91.4 493.5L89 491.5L90.5 490.9L90.3 493.7L90.2 495.8L90.6 496.3L90.8 495.8L90.2 495.9L88.4 497.2L86.2 498.9L84.2 499L84.7 498.1L85.2 498.7L84.1 501.8L83.1 504.8L83.9 505.2L84.4 503.8L82.7 504.6L79.9 506.8L78.3 507.6L78.5 506.5L79.2 506.8L79.3 509.8L78.7 513L78.5 513.6L79.3 513L78 512.7L74.6 513.3L71.7 513.7L71.3 513.1L72.3 512.6L71.7 513.8L70.8 517.2L70.4 520.1L71 520.5L71.5 519.5L70.2 519.7L67.4 521.5L64.8 523L64.1 523L64.5 522.3L65.3 523.4L66 526.8L66.8 529.4L67.4 526.9L64.6 526.1L66.1 527.3L69.5 528.8L71.2 530.1L70.2 530.5L71.7 530.7L71.8 527.8L69.6 524.9L68.2 524.2L68.3 525.4L71.5 525.2L70.6 523.7L67.8 524.9L65.7 525.5L65.1 525.2L65.7 524.7L65.9 525.3L65.2 527.5L64 530.3L63.5 532.1L64.3 532.1L64.7 531.1L63.9 531.4L62.1 533.3L60.2 535.7L58.3 536.6L58.6 535.1L60.8 535.5L58.9 538.4L56.5 540.5L57.4 541L58.5 540.3L56 539.2L52.1 538.1L50.2 539.5L50.9 540.4L52.1 540.2L55.7 542L58.3 542.9L58.1 541.6L57.8 542.6L55.9 545.1L53.7 546.3L53.8 545.5L54.4 545.9L54.1 549L54.1 551.2L54.8 550.7L53.9 550.6L51.1 552.3L49.2 553.2L49.5 552.3L49.8 553.4L49.2 556.7L49.3 558.5L50.2 557.8L49.7 556.7L49.1 558.1L48.5 561L48 563.6L47.4 564.5L48.3 565.8L50 565.5L50.6 563.9L52.1 561.2L53.3 558.9L53.4 557.9L52.8 558.2L54.6 556.6L56.2 558.9L54.5 561.4L53.6 562.6L53.3 562.6L53.6 562.8L53.9 564.5L54.2 566.8L54.6 568L54.7 567.9L54.2 568.2L53.1 570L50.9 569.6L50.1 569.2L50.2 569.2L49.4 569.8L47.4 570.9L44.9 572.8L45.6 573.4L46.8 570.6L44.8 571.4L44.7 575.1L44 575.9L43.5 574.7L44.8 575L47.7 577.5L49.6 578.7L49.5 577.5L49.9 578.3L47.4 580.5L44.2 581.5L43.7 580.8L45.2 580.2L44.7 584.1L47.7 583.8L46.2 582.4L46.5 585.3L47.5 589.2L46 588.5L47.3 587.8L51.8 589.2L52.9 589.8L52.2 589.9L48.3 591.7L46.1 591.8L47.5 590.4L47.4 593.6L46.1 595.6L44.6 595.4L44.6 595.4 M305.9 6.2L309.6 12.3L305.9 18.5L291.1 20.9L281.3 24.6L277.6 30.8L278.8 39.4L283.7 45.6L280 53L273.9 54.2L266.5 48L256.7 44.3L248 40.6L239.4 40.6L233.3 46.8L228.3 53 M208.6 105.2L312.1 105.2L312.1 97.3L309.6 89.2L324.4 91.1L400 91.1L498.5 94.1L600 96.6L703.4 96.2L765.5 96.2L787.5 95.2L806.1 98.3 M636.2 95.7L651.7 86.6L667.2 84L677.6 82.8L682.8 75L695.7 69.8L699.6 60.8L707.3 56.9L707.3 49.1L716.4 44L729.3 38.8L742.2 32.3L752.6 23.3L759 16.8L764.2 12.9 M748.7 6.5L755.2 11.6L764.2 12.9L765.5 20.7L770.7 28.4L778.4 34.9L786.2 41.4L796.5 40.1L804.3 33.6L806.9 32.3 M787.5 95.2L783.6 103.4L781 111.2L782.3 119L773.3 120.2L765.5 126.7L760.3 137.1L752.6 139.6L744.8 135.8L734.5 139.6L726.7 147.4L719 152.6L715.1 148.7L713.8 143.5L706 147.4L699.6 155.2L693.1 155.2L690.5 165.5L685.3 169.4L677.6 168.1L664.6 175.8L651.7 186.2L641.4 186.2L625.9 190.1L615.5 196.5L610.3 206.9L611.6 200L609.1 210.3L600 215.5L600 217.2L595.8 214.8L590.9 218.5L589.7 227.1L588.4 238.9 M142.9 238.2L200 238.2L298.5 238.2L335.5 237.4L400 238.2L600 238.9L677.6 238.3L690.5 233.6L703.4 231L713.8 225.9L724.1 223.3L731.9 219.4L739.6 220.2L755.2 220.7L781 222L806.9 223.3 M299.8 238.2L303.4 244.3L307.1 246.8L305.9 261.6L303 298.5L298.5 347.8L294.8 377.3L292.4 400L287.4 436.9L283.7 469L280 503.4L279.3 518.2L280.8 547.8L282 577.3L283.3 600L283.7 600L285 624.6L285.7 646.8L286.2 653 M492.4 238.9L496.1 259.1L501 286.2L505.9 318.2L510.8 347.8L515.8 377.3L519.5 400L523.2 414.8L525.6 429.6L530.5 446.8L535.5 456.7L540.4 466.5L537.9 473.9L545.3 480L542.9 485L535.5 489.9L533 498.5L533 505.9L533 537.9L531.8 557.6L529.3 572.4L534.2 584.7L537.9 594.6L539.2 600L541.6 607.4L544.1 614.8L547.8 620.2 M677.6 238.3L669.8 246.5L663.4 254.3L660.8 263.4L667.2 269.8L675 275L685.3 284L694.4 284L698.3 290.5L703.4 300.9L706 311.2L713.8 321.5L719 330.6L729.3 337.1L737.1 343.5L744.8 355.2L752.6 362.9L760.3 368.1L766.8 378.4L765.5 384.9L772 391.4L778.4 399.1L786.2 406.9L791.4 410L778.4 400L783.6 406.5L792.7 411.6L797.8 418.1L800.4 425.9L804.3 433.6L806.1 441.4 M6.2 415.3L78.8 415.3 M44.3 594.1L186 594.1L184.7 597L187.2 600L184.7 600L182.3 609.9L177.3 622.2L179.8 632L184.7 639.4L189.7 646.8L181.7 633.5L185.4 638.5L189.1 641.5L189.7 646.5L192.8 652L194 658.2L195.9 663.1L197.7 667.4 M537.9 594.6L400 594.6L344.1 594.6L344.1 600L344.1 600L341.6 607.4L347.8 613.5L355.2 620.9L358.9 627.1L357.6 636.9L356.4 644.3 M547.8 620.2L600 622.7L743.5 632.3L744.8 646.5L750 650.4L756.5 650.4L757.7 638.8L760.3 625.9L757.7 615.5L762.9 610.3L770.7 610.3L781 616.8L791.4 618.1" fill="none" stroke="#000" stroke-width="1.1"/>
<g fill="none" stroke="#ffffff" stroke-width="0.85"><circle cx="407" cy="407" r="519.5"/><circle cx="407" cy="407" r="399.5"/><circle cx="407" cy="407" r="279.5"/><circle cx="407" cy="407" r="159.5"/></g>
<rect x="394.8" y="6.0" width="24.0" height="3" fill="#5c4e49"/>
<text x="406" y="11.5" text-anchor="middle" font-family="'DejaVu Sans','Liberation Sans',sans-serif" font-size="10" fill="#ffff88" textLength="20.5" lengthAdjust="spacingAndGlyphs">313</text>
<rect x="394.8" y="126.0" width="24.0" height="3" fill="#5c4e49"/>
<text x="406" y="131.5" text-anchor="middle" font-family="'DejaVu Sans','Liberation Sans',sans-serif" font-size="10" fill="#ffff88" textLength="20.5" lengthAdjust="spacingAndGlyphs">219</text>
<rect x="394.8" y="246.0" width="24.0" height="3" fill="#5c4e49"/>
<text x="406" y="251.5" text-anchor="middle" font-family="'DejaVu Sans','Liberation Sans',sans-serif" font-size="10" fill="#ffff88" textLength="20.5" lengthAdjust="spacingAndGlyphs">125</text>
<text x="406" y="371.3" text-anchor="middle" font-family="'DejaVu Sans','Liberation Sans',sans-serif" font-size="10" fill="#ffff88" textLength="12.2" lengthAdjust="spacingAndGlyphs">31</text>
<circle cx="407" cy="407.3" r="39.8" fill="none" stroke="#ff0000" stroke-width="1"/>
<path d="M12 26h3v1h-3zM10 27h2v1h-2zM15 27h2v1h-2zM10 28h1v1h-1zM13 28h1v1h-1zM16 28h1v1h-1zM9 29h1v1h-1zM13 29h1v1h-1zM17 29h1v1h-1zM9 30h1v1h-1zM11 30h5v1h-5zM17 30h1v1h-1zM9 31h1v1h-1zM13 31h1v1h-1zM17 31h1v1h-1zM10 32h1v1h-1zM13 32h1v1h-1zM16 32h1v1h-1zM10 33h2v1h-2zM15 33h2v1h-2zM12 34h3v1h-3z" fill="#ffb400"/>
<path d="M75 57h3v1h-3zM73 58h2v1h-2zM78 58h2v1h-2zM73 59h1v1h-1zM79 59h1v1h-1zM72 60h1v1h-1zM80 60h1v1h-1zM72 61h1v1h-1zM74 61h5v1h-5zM80 61h1v1h-1zM72 62h1v1h-1zM80 62h1v1h-1zM73 63h1v1h-1zM79 63h1v1h-1zM73 64h2v1h-2zM78 64h2v1h-2zM75 65h3v1h-3z" fill="#ffff00"/>
<path d="M64 80h7v1h-7z" fill="#ffff00"/>
<path d="M41 95h7v1h-7z" fill="#f08000"/>
<path d="M102 84h1v1h-1zM102 85h1v1h-1zM102 86h1v1h-1zM99 87h7v1h-7zM102 88h1v1h-1zM102 89h1v1h-1zM102 90h1v1h-1z" fill="#ffb400"/>
<path d="M120 37h3v1h-3zM118 38h2v1h-2zM123 38h2v1h-2zM118 39h1v1h-1zM124 39h1v1h-1zM117 40h1v1h-1zM125 40h1v1h-1zM117 41h1v1h-1zM119 41h5v1h-5zM125 41h1v1h-1zM117 42h1v1h-1zM125 42h1v1h-1zM118 43h1v1h-1zM124 43h1v1h-1zM118 44h2v1h-2zM123 44h2v1h-2zM120 45h3v1h-3z" fill="#ffb400"/>
<path d="M123 39h3v1h-3zM121 40h2v1h-2zM126 40h2v1h-2zM121 41h1v1h-1zM127 41h1v1h-1zM120 42h1v1h-1zM128 42h1v1h-1zM120 43h1v1h-1zM122 43h5v1h-5zM128 43h1v1h-1zM120 44h1v1h-1zM128 44h1v1h-1zM121 45h1v1h-1zM127 45h1v1h-1zM121 46h2v1h-2zM126 46h2v1h-2zM123 47h3v1h-3z" fill="#f05a10"/>
<path d="M154 41h1v1h-1zM154 42h1v1h-1zM154 43h1v1h-1zM151 44h7v1h-7zM154 45h1v1h-1zM154 46h1v1h-1zM154 47h1v1h-1z" fill="#ffb400"/>
<path d="M160 36h3v1h-3zM158 37h2v1h-2zM163 37h2v1h-2zM158 38h1v1h-1zM161 38h1v1h-1zM164 38h1v1h-1zM157 39h1v1h-1zM161 39h1v1h-1zM165 39h1v1h-1zM157 40h1v1h-1zM159 40h5v1h-5zM165 40h1v1h-1zM157 41h1v1h-1zM161 41h1v1h-1zM165 41h1v1h-1zM158 42h1v1h-1zM161 42h1v1h-1zM164 42h1v1h-1zM158 43h2v1h-2zM163 43h2v1h-2zM160 44h3v1h-3z" fill="#ffb400"/>
<path d="M182 45h3v1h-3zM180 46h2v1h-2zM185 46h2v1h-2zM180 47h1v1h-1zM186 47h1v1h-1zM179 48h1v1h-1zM187 48h1v1h-1zM179 49h1v1h-1zM181 49h5v1h-5zM187 49h1v1h-1zM179 50h1v1h-1zM187 50h1v1h-1zM180 51h1v1h-1zM186 51h1v1h-1zM180 52h2v1h-2zM185 52h2v1h-2zM182 53h3v1h-3z" fill="#f05a10"/>
<path d="M193 49h7v1h-7z" fill="#f08000"/>
<path d="M193 51h7v1h-7z" fill="#f08000"/>
<path d="M189 70h7v1h-7z" fill="#f08000"/>
<path d="M184 77h3v1h-3zM182 78h2v1h-2zM187 78h2v1h-2zM182 79h1v1h-1zM185 79h1v1h-1zM188 79h1v1h-1zM181 80h1v1h-1zM185 80h1v1h-1zM189 80h1v1h-1zM181 81h1v1h-1zM183 81h5v1h-5zM189 81h1v1h-1zM181 82h1v1h-1zM185 82h1v1h-1zM189 82h1v1h-1zM182 83h1v1h-1zM185 83h1v1h-1zM188 83h1v1h-1zM182 84h2v1h-2zM187 84h2v1h-2zM184 85h3v1h-3z" fill="#f05a10"/>
<path d="M124 95h3v1h-3zM122 96h2v1h-2zM127 96h2v1h-2zM122 97h1v1h-1zM128 97h1v1h-1zM121 98h1v1h-1zM129 98h1v1h-1zM121 99h1v1h-1zM123 99h5v1h-5zM129 99h1v1h-1zM121 100h1v1h-1zM129 100h1v1h-1zM122 101h1v1h-1zM128 101h1v1h-1zM122 102h2v1h-2zM127 102h2v1h-2zM124 103h3v1h-3z" fill="#ffb400"/>
<path d="M130 95h1v1h-1zM130 96h1v1h-1zM130 97h1v1h-1zM127 98h7v1h-7zM130 99h1v1h-1zM130 100h1v1h-1zM130 101h1v1h-1z" fill="#ffb400"/>
<path d="M91 103h3v1h-3zM89 104h2v1h-2zM94 104h2v1h-2zM89 105h1v1h-1zM95 105h1v1h-1zM88 106h1v1h-1zM96 106h1v1h-1zM88 107h1v1h-1zM90 107h5v1h-5zM96 107h1v1h-1zM88 108h1v1h-1zM96 108h1v1h-1zM89 109h1v1h-1zM95 109h1v1h-1zM89 110h2v1h-2zM94 110h2v1h-2zM91 111h3v1h-3z" fill="#f08000"/>
<path d="M119 106h3v1h-3zM117 107h2v1h-2zM122 107h2v1h-2zM117 108h1v1h-1zM123 108h1v1h-1zM116 109h1v1h-1zM124 109h1v1h-1zM116 110h1v1h-1zM118 110h5v1h-5zM124 110h1v1h-1zM116 111h1v1h-1zM124 111h1v1h-1zM117 112h1v1h-1zM123 112h1v1h-1zM117 113h2v1h-2zM122 113h2v1h-2zM119 114h3v1h-3z" fill="#ffb400"/>
<path d="M98 116h1v1h-1zM98 117h1v1h-1zM98 118h1v1h-1zM95 119h7v1h-7zM98 120h1v1h-1zM98 121h1v1h-1zM98 122h1v1h-1z" fill="#ffff00"/>
<path d="M116 124h7v1h-7z" fill="#f08000"/>
<path d="M93 135h7v1h-7z" fill="#f05a10"/>
<path d="M90 138h1v1h-1zM90 139h1v1h-1zM90 140h1v1h-1zM87 141h7v1h-7zM90 142h1v1h-1zM90 143h1v1h-1zM90 144h1v1h-1z" fill="#ffb400"/>
<path d="M146 125h1v1h-1zM146 126h1v1h-1zM146 127h1v1h-1zM143 128h7v1h-7zM146 129h1v1h-1zM146 130h1v1h-1zM146 131h1v1h-1z" fill="#ffb400"/>
<path d="M121 141h3v1h-3zM119 142h2v1h-2zM124 142h2v1h-2zM119 143h1v1h-1zM125 143h1v1h-1zM118 144h1v1h-1zM126 144h1v1h-1zM118 145h1v1h-1zM120 145h5v1h-5zM126 145h1v1h-1zM118 146h1v1h-1zM126 146h1v1h-1zM119 147h1v1h-1zM125 147h1v1h-1zM119 148h2v1h-2zM124 148h2v1h-2zM121 149h3v1h-3z" fill="#f08000"/>
<path d="M188 106h1v1h-1zM188 107h1v1h-1zM188 108h1v1h-1zM185 109h7v1h-7zM188 110h1v1h-1zM188 111h1v1h-1zM188 112h1v1h-1z" fill="#ffb400"/>
<path d="M197 103h1v1h-1zM197 104h1v1h-1zM197 105h1v1h-1zM194 106h7v1h-7zM197 107h1v1h-1zM197 108h1v1h-1zM197 109h1v1h-1z" fill="#ffd000"/>
<path d="M118 161h1v1h-1zM118 162h1v1h-1zM118 163h1v1h-1zM115 164h7v1h-7zM118 165h1v1h-1zM118 166h1v1h-1zM118 167h1v1h-1z" fill="#ffb400"/>
<path d="M153 165h1v1h-1zM153 166h1v1h-1zM153 167h1v1h-1zM150 168h7v1h-7zM153 169h1v1h-1zM153 170h1v1h-1zM153 171h1v1h-1z" fill="#ffd000"/>
<path d="M166 167h7v1h-7z" fill="#f08000"/>
<path d="M181 187h1v1h-1zM181 188h1v1h-1zM181 189h1v1h-1zM178 190h7v1h-7zM181 191h1v1h-1zM181 192h1v1h-1zM181 193h1v1h-1z" fill="#ffb400"/>
<path d="M240 32h3v1h-3zM238 33h2v1h-2zM243 33h2v1h-2zM238 34h1v1h-1zM241 34h1v1h-1zM244 34h1v1h-1zM237 35h1v1h-1zM241 35h1v1h-1zM245 35h1v1h-1zM237 36h1v1h-1zM239 36h5v1h-5zM245 36h1v1h-1zM237 37h1v1h-1zM241 37h1v1h-1zM245 37h1v1h-1zM238 38h1v1h-1zM241 38h1v1h-1zM244 38h1v1h-1zM238 39h2v1h-2zM243 39h2v1h-2zM240 40h3v1h-3z" fill="#ffb400"/>
<path d="M232 51h1v1h-1zM232 52h1v1h-1zM232 53h1v1h-1zM229 54h7v1h-7zM232 55h1v1h-1zM232 56h1v1h-1zM232 57h1v1h-1z" fill="#f05a10"/>
<path d="M200 92h7v1h-7z" fill="#f08000"/>
<path d="M254 103h1v1h-1zM254 104h1v1h-1zM254 105h1v1h-1zM251 106h7v1h-7zM254 107h1v1h-1zM254 108h1v1h-1zM254 109h1v1h-1z" fill="#ffb400"/>
<path d="M235 114h7v1h-7z" fill="#f08000"/>
<path d="M244 119h7v1h-7z" fill="#f08000"/>
<path d="M237 130h7v1h-7z" fill="#f08000"/>
<path d="M216 179h7v1h-7z" fill="#f08000"/>
<path d="M757 57h3v1h-3zM755 58h2v1h-2zM760 58h2v1h-2zM755 59h1v1h-1zM758 59h1v1h-1zM761 59h1v1h-1zM754 60h1v1h-1zM758 60h1v1h-1zM762 60h1v1h-1zM754 61h1v1h-1zM756 61h5v1h-5zM762 61h1v1h-1zM754 62h1v1h-1zM758 62h1v1h-1zM762 62h1v1h-1zM755 63h1v1h-1zM758 63h1v1h-1zM761 63h1v1h-1zM755 64h2v1h-2zM760 64h2v1h-2zM757 65h3v1h-3z" fill="#ffd000"/>
<path d="M724 226h7v1h-7z" fill="#f05a10"/>
<path d="M642 763h7v1h-7z" fill="#f08000"/>
<rect x="6" y="798" width="248" height="8" fill="#004166"/><rect x="8" y="758" width="246" height="46" fill="#000"/>
<rect x="9.5" y="759.5" width="243" height="43" fill="#000" stroke="#a8a8a8"/>
<text x="13.2" y="770.6" font-family="'DejaVu Sans','Liberation Sans',sans-serif" font-size="9.8" fill="#f0f0f0" textLength="36" lengthAdjust="spacingAndGlyphs">Symbols</text>
<text x="53.2" y="770.8" font-family="'DejaVu Sans','Liberation Sans',sans-serif" font-size="9.8" fill="#f0f0f0" textLength="16.8" lengthAdjust="spacingAndGlyphs">-CG</text>
<text x="78" y="770.8" font-family="'DejaVu Sans','Liberation Sans',sans-serif" font-size="9.8" fill="#f0f0f0" textLength="14" lengthAdjust="spacingAndGlyphs">-IC</text>
<text x="99.2" y="770.8" font-family="'DejaVu Sans','Liberation Sans',sans-serif" font-size="9.8" fill="#f0f0f0" textLength="19.6" lengthAdjust="spacingAndGlyphs">+CG</text>
<text x="124.3" y="770.8" font-family="'DejaVu Sans','Liberation Sans',sans-serif" font-size="9.8" fill="#f0f0f0" textLength="16.6" lengthAdjust="spacingAndGlyphs">+IC</text>
<text x="153" y="770.8" font-family="'DejaVu Sans','Liberation Sans',sans-serif" font-size="9.8" fill="#f0f0f0" textLength="90" lengthAdjust="spacingAndGlyphs">Strike age color codes</text>
<text x="13.5" y="783.7" font-family="'DejaVu Sans','Liberation Sans',sans-serif" font-size="9.8" fill="#f0f0f0" textLength="27.6" lengthAdjust="spacingAndGlyphs">Recent</text>
<text x="13.5" y="796.6" font-family="'DejaVu Sans','Liberation Sans',sans-serif" font-size="9.8" fill="#f0f0f0" textLength="14.5" lengthAdjust="spacingAndGlyphs">Old</text>
<path d="M59 776h3v1h-3zM57 777h2v1h-2zM62 777h2v1h-2zM57 778h1v1h-1zM63 778h1v1h-1zM56 779h1v1h-1zM64 779h1v1h-1zM56 780h1v1h-1zM58 780h5v1h-5zM64 780h1v1h-1zM56 781h1v1h-1zM64 781h1v1h-1zM57 782h1v1h-1zM63 782h1v1h-1zM57 783h2v1h-2zM62 783h2v1h-2zM59 784h3v1h-3z" fill="#00e8e8"/>
<path d="M82 780h7v1h-7z" fill="#00e8e8"/>
<path d="M109 776h3v1h-3zM107 777h2v1h-2zM112 777h2v1h-2zM107 778h1v1h-1zM110 778h1v1h-1zM113 778h1v1h-1zM106 779h1v1h-1zM110 779h1v1h-1zM114 779h1v1h-1zM106 780h1v1h-1zM108 780h5v1h-5zM114 780h1v1h-1zM106 781h1v1h-1zM110 781h1v1h-1zM114 781h1v1h-1zM107 782h1v1h-1zM110 782h1v1h-1zM113 782h1v1h-1zM107 783h2v1h-2zM112 783h2v1h-2zM109 784h3v1h-3z" fill="#00e8e8"/>
<path d="M135 777h1v1h-1zM135 778h1v1h-1zM135 779h1v1h-1zM132 780h7v1h-7zM135 781h1v1h-1zM135 782h1v1h-1zM135 783h1v1h-1z" fill="#00e8e8"/>
<path d="M59 789h3v1h-3zM57 790h2v1h-2zM62 790h2v1h-2zM57 791h1v1h-1zM63 791h1v1h-1zM56 792h1v1h-1zM64 792h1v1h-1zM56 793h1v1h-1zM58 793h5v1h-5zM64 793h1v1h-1zM56 794h1v1h-1zM64 794h1v1h-1zM57 795h1v1h-1zM63 795h1v1h-1zM57 796h2v1h-2zM62 796h2v1h-2zM59 797h3v1h-3z" fill="#ffff00"/>
<path d="M82 793h7v1h-7z" fill="#ffff00"/>
<path d="M109 789h3v1h-3zM107 790h2v1h-2zM112 790h2v1h-2zM107 791h1v1h-1zM110 791h1v1h-1zM113 791h1v1h-1zM106 792h1v1h-1zM110 792h1v1h-1zM114 792h1v1h-1zM106 793h1v1h-1zM108 793h5v1h-5zM114 793h1v1h-1zM106 794h1v1h-1zM110 794h1v1h-1zM114 794h1v1h-1zM107 795h1v1h-1zM110 795h1v1h-1zM113 795h1v1h-1zM107 796h2v1h-2zM112 796h2v1h-2zM109 797h3v1h-3z" fill="#ffff00"/>
<path d="M135 790h1v1h-1zM135 791h1v1h-1zM135 792h1v1h-1zM132 793h7v1h-7zM135 794h1v1h-1zM135 795h1v1h-1zM135 796h1v1h-1z" fill="#ffff00"/>
<text x="153.8" y="783.8" font-family="'DejaVu Sans','Liberation Sans',sans-serif" font-size="9.8" fill="#ffd000" textLength="15.4" lengthAdjust="spacingAndGlyphs">15+</text>
<text x="188.6" y="783.8" font-family="'DejaVu Sans','Liberation Sans',sans-serif" font-size="9.8" fill="#ffa800" textLength="15.4" lengthAdjust="spacingAndGlyphs">30+</text>
<text x="223.6" y="783.8" font-family="'DejaVu Sans','Liberation Sans',sans-serif" font-size="9.8" fill="#ff9000" textLength="15.4" lengthAdjust="spacingAndGlyphs">45+</text>
<text x="153.8" y="796.7" font-family="'DejaVu Sans','Liberation Sans',sans-serif" font-size="9.8" fill="#ff7800" textLength="15.4" lengthAdjust="spacingAndGlyphs">60+</text>
<text x="188.6" y="796.7" font-family="'DejaVu Sans','Liberation Sans',sans-serif" font-size="9.8" fill="#ff6000" textLength="15.4" lengthAdjust="spacingAndGlyphs">75+</text>
<text x="223.6" y="796.7" font-family="'DejaVu Sans','Liberation Sans',sans-serif" font-size="9.8" fill="#ff3000" textLength="15.4" lengthAdjust="spacingAndGlyphs">90+</text>
<rect x="685" y="792" width="125" height="20" fill="#000"/>
<text x="689.1" y="801.7" font-family="'DejaVu Sans','Liberation Sans',sans-serif" font-size="9.8" fill="#fff" textLength="113" lengthAdjust="spacingAndGlyphs">©2005 Astrogenic Systems</text>

</svg>
<!-- RIGHT PANEL -->
<g font-family="'DejaVu Sans','Liberation Sans',sans-serif" font-size="13">
<rect x="812.5" y="8.5" width="319" height="319" rx="7" fill="none" stroke="#c4c4c4"/>
<rect x="812.5" y="333.5" width="319" height="114" rx="7" fill="none" stroke="#c4c4c4"/>
<rect x="812.5" y="453.5" width="319" height="349" rx="7" fill="none" stroke="#c4c4c4"/>
<rect x="819" y="16" width="58" height="18" fill="#550000"/>
<path d="M819.5 34V16.5H877" fill="none" stroke="#f0f0f0"/>
<path d="M820 33.5H876.5V17" fill="none" stroke="#9a9a9a"/>
<text x="824.5" y="30" font-weight="bold" fill="#d4d4d4" textLength="47.5" lengthAdjust="spacingAndGlyphs">STRIKE</text>
<rect x="883" y="16" width="58" height="18" fill="#333"/>
<path d="M883.5 34V16.5H941" fill="none" stroke="#f0f0f0"/>
<path d="M884 33.5H940.5V17" fill="none" stroke="#9a9a9a"/>
<text x="890.7" y="30" font-weight="bold" fill="#c8c8c8" textLength="42.8" lengthAdjust="spacingAndGlyphs">NOISE</text>
<rect x="994" y="16" width="128" height="18" fill="#333"/>
<path d="M994.5 34V16.5H1122" fill="none" stroke="#f0f0f0"/>
<path d="M995 33.5H1121.5V17" fill="none" stroke="#9a9a9a"/>
<text x="998.8" y="30" font-weight="bold" fill="#fff" textLength="61.6" lengthAdjust="spacingAndGlyphs">Bng 326°</text>
<text x="1075.2" y="30" font-weight="bold" fill="#00ea00" textLength="42.7" lengthAdjust="spacingAndGlyphs">420mi</text>
<rect x="821" y="64" width="82" height="16" fill="#555"/>
<path d="M821.5 80V64.5H903" fill="none" stroke="#f0f0f0"/>
<path d="M822 79.5H902.5V65" fill="none" stroke="#9a9a9a"/>
<text x="829.4" y="76.5" fill="#ececec" textLength="65.5" lengthAdjust="spacingAndGlyphs">Strikes/min</text>
<rect x="931" y="64" width="82" height="16" fill="#555"/>
<path d="M931.5 80V64.5H1013" fill="none" stroke="#f0f0f0"/>
<path d="M932 79.5H1012.5V65" fill="none" stroke="#9a9a9a"/>
<text x="943.6" y="76.5" fill="#ececec" textLength="57.2" lengthAdjust="spacingAndGlyphs">Close/min</text>
<rect x="1041" y="64" width="82" height="16" fill="#555"/>
<path d="M1041.5 80V64.5H1123" fill="none" stroke="#f0f0f0"/>
<path d="M1042 79.5H1122.5V65" fill="none" stroke="#9a9a9a"/>
<text x="1050.6" y="76.5" fill="#ececec" textLength="62.2" lengthAdjust="spacingAndGlyphs">Noises/min</text>
<text x="901.6" y="112" text-anchor="end" font-weight="bold" font-size="28" fill="#fff" textLength="17.5" lengthAdjust="spacingAndGlyphs">0</text>
<text x="1011.7" y="112" text-anchor="end" font-weight="bold" font-size="28" fill="#fff" textLength="17.5" lengthAdjust="spacingAndGlyphs">0</text>
<text x="1121.7" y="112" text-anchor="end" font-weight="bold" font-size="28" fill="#c0c0c0" textLength="17.5" lengthAdjust="spacingAndGlyphs">0</text>
<text x="902.6" y="143" text-anchor="end" fill="#fff" textLength="76.2" lengthAdjust="spacingAndGlyphs">Total Strikes</text>
<text x="1012.8" y="143" text-anchor="end" fill="#fff" textLength="68.3" lengthAdjust="spacingAndGlyphs">Total Close</text>
<text x="1122.4" y="143" text-anchor="end" fill="#c8c8c8" textLength="75.0" lengthAdjust="spacingAndGlyphs">Total Noises</text>
<text x="902.4" y="161" text-anchor="end" fill="#fff" textLength="30.0" lengthAdjust="spacingAndGlyphs">1748</text>
<text x="1012.2" y="161" text-anchor="end" fill="#fff" textLength="6.8" lengthAdjust="spacingAndGlyphs">0</text>
<text x="1121.5" y="161" text-anchor="end" fill="#fff" textLength="21.0" lengthAdjust="spacingAndGlyphs">141</text>
<text x="821" y="215" fill="#c0c0c0" textLength="164.6" lengthAdjust="spacingAndGlyphs">Lightning type distribution</text>
<rect x="821" y="216" width="303" height="1" fill="#8c8c8c"/>
<text x="821" y="236.5" font-weight="bold" fill="#fff" textLength="84.5" lengthAdjust="spacingAndGlyphs">Cloud-ground</text>
<text x="913" y="236.5" fill="#e0e0e0" textLength="8.5" lengthAdjust="spacingAndGlyphs">+</text>
<rect x="925.5" y="227.5" width="50" height="10" rx="2" fill="#000" stroke="#a8a8a8"/>
<rect x="926" y="228" width="15" height="9" fill="#ff0000"/>
<text x="979.5" y="236.5" font-weight="bold" fill="#fff" textLength="28.8" lengthAdjust="spacingAndGlyphs">30%</text>
<rect x="1016" y="231" width="6.5" height="2" fill="#c8c8c8"/>
<rect x="1028.5" y="227.5" width="50" height="10" rx="2" fill="#000" stroke="#a8a8a8"/>
<rect x="1029" y="228" width="5" height="9" fill="#99ccff"/>
<text x="1082.5" y="236.5" font-weight="bold" fill="#fff" textLength="28.7" lengthAdjust="spacingAndGlyphs">11%</text>
<text x="821" y="261" font-weight="bold" fill="#c0c0c0" textLength="38.0" lengthAdjust="spacingAndGlyphs">Count</text>
<text x="925.5" y="261" font-weight="bold" fill="#fff" textLength="23.3" lengthAdjust="spacingAndGlyphs">530</text>
<text x="1029" y="261" font-weight="bold" fill="#fff" textLength="22.8" lengthAdjust="spacingAndGlyphs">193</text>
<text x="821" y="290.5" font-weight="bold" fill="#fff" textLength="63.3" lengthAdjust="spacingAndGlyphs">Intracloud</text>
<text x="913" y="290.5" fill="#e0e0e0" textLength="8.5" lengthAdjust="spacingAndGlyphs">+</text>
<rect x="925.5" y="281.5" width="50" height="10" rx="2" fill="#000" stroke="#a8a8a8"/>
<rect x="926" y="282" width="7" height="9" fill="#f060b0"/>
<text x="979.5" y="290.5" font-weight="bold" fill="#fff" textLength="28.8" lengthAdjust="spacingAndGlyphs">14%</text>
<rect x="1016" y="285" width="6.5" height="2" fill="#c8c8c8"/>
<rect x="1028.5" y="281.5" width="50" height="10" rx="2" fill="#000" stroke="#a8a8a8"/>
<rect x="1029" y="282" width="22" height="9" fill="#00ff00"/>
<text x="1082.5" y="290.5" font-weight="bold" fill="#fff" textLength="28.7" lengthAdjust="spacingAndGlyphs">45%</text>
<text x="821" y="315" font-weight="bold" fill="#c0c0c0" textLength="38.0" lengthAdjust="spacingAndGlyphs">Count</text>
<text x="925.5" y="315" font-weight="bold" fill="#fff" textLength="23.3" lengthAdjust="spacingAndGlyphs">247</text>
<text x="1029" y="315" font-weight="bold" fill="#fff" textLength="22.8" lengthAdjust="spacingAndGlyphs">778</text>
<text x="822.5" y="353" font-weight="bold" font-size="16" fill="#00ea00" textLength="211.5" lengthAdjust="spacingAndGlyphs">10/23/2025 5:19:16 PM</text>
<rect x="821" y="358" width="302" height="1" fill="#8c8c8c"/>
<text x="821.3" y="388" fill="#fff" textLength="48.5" lengthAdjust="spacingAndGlyphs">Squelch</text>
<text x="909.8" y="388" fill="#fff" textLength="6.8" lengthAdjust="spacingAndGlyphs">0</text>
<text x="981.6" y="388" fill="#fff" textLength="43.2" lengthAdjust="spacingAndGlyphs">Upload</text>
<text x="1061.4" y="388" fill="#c8c8c8" textLength="53.2" lengthAdjust="spacingAndGlyphs">Disabled</text>
<text x="821.3" y="408" fill="#fff" textLength="72.4" lengthAdjust="spacingAndGlyphs">Persistence</text>
<text x="909.8" y="408" fill="#fff" textLength="41.0" lengthAdjust="spacingAndGlyphs">90 min</text>
<text x="981.6" y="408" fill="#fff" textLength="50.0" lengthAdjust="spacingAndGlyphs">Capture</text>
<text x="1061.4" y="408" fill="#00ea00" textLength="36.0" lengthAdjust="spacingAndGlyphs">Active</text>
<text x="821.3" y="428" fill="#fff" textLength="39.5" lengthAdjust="spacingAndGlyphs">Range</text>
<text x="909.8" y="428" fill="#fff" textLength="40.6" lengthAdjust="spacingAndGlyphs">313 mi</text>
<text x="981.6" y="428" fill="#fff" textLength="52.0" lengthAdjust="spacingAndGlyphs">Receiver</text>
<text x="1061.4" y="428" fill="#00ea00" textLength="49.7" lengthAdjust="spacingAndGlyphs">Enabled</text>
<text x="821.7" y="475" fill="#c0c0c0" textLength="43.1" lengthAdjust="spacingAndGlyphs">Uptime</text>
<text x="821.7" y="498" fill="#c0c0c0" textLength="60.3" lengthAdjust="spacingAndGlyphs">Peak rate</text>
<text x="910.5" y="475" fill="#fff" textLength="42.9" lengthAdjust="spacingAndGlyphs">156:49</text>
<text x="910.5" y="498" fill="#fff" textLength="41.1" lengthAdjust="spacingAndGlyphs">17/min</text>
<text x="981.4" y="475" fill="#c0c0c0" textLength="61.0" lengthAdjust="spacingAndGlyphs">Peak time</text>
<text x="981.4" y="498" fill="#fff" textLength="50.0" lengthAdjust="spacingAndGlyphs">3:30 AM</text>
<text x="1061.2" y="475" fill="#c0c0c0" textLength="23.8" lengthAdjust="spacingAndGlyphs">Plot</text>
<text x="1061.2" y="498" fill="#fff" textLength="35.4" lengthAdjust="spacingAndGlyphs">Strike</text>
<text x="822.7" y="528" fill="#c0c0c0" textLength="75.7" lengthAdjust="spacingAndGlyphs">Trend graph</text>
<text x="908.6" y="528" fill="#fff" textLength="41.1" lengthAdjust="spacingAndGlyphs">60 min</text>
</g>
<!-- GRAPH -->
<g shape-rendering="crispEdges">
<path d="M822 777.5H1088.5V542" fill="none" stroke="#c8c8c8" stroke-width="1"/>
<path d="M1084 542.5h5M1084 620.5h5M1084 699.5h5M1086 581.5h3M1086 660.5h3M1086 738.5h3" stroke="#c8c8c8" stroke-width="1"/>
<path d="M822.5 777.5L822.5 762L824 769.7L829.5 769.7L831.5 777.5 M838 777.5L843.5 762L845 769.7L850.5 769.7L852.5 777.5 M858.5 777.5L859.5 753.8L862.5 753.8L864 762L864.5 775L866 777.5 M868 777.5L870.5 769.7L873.5 769.7L875 777.5 M894.5 777.5L896.5 769.7L899.5 769.7L901 777.5 M903.5 777.5L908.5 762L910.5 769.7L912 777.5L914.5 769.7L917 769.7L919 777.5L920.5 769.7L923.5 769.7L925 777.5 M933 777.5L936 769.7L939 769.7L941 776L942.5 769.7L945 769.7L946.5 776L948 769.7L951.5 769.7L953.5 777.5 M977 777.5L979 769.7L981.5 769.7L983 776L985.5 769.7L993.5 769.7L995.5 777.5 M1013.5 777.5L1015 769.7L1018 769.7L1019.5 777.5 M1025 777.5L1028.5 762L1030.5 762L1032 769.7L1033.5 769.7L1035 777.5 M1039 777.5L1040.5 762L1043.5 762L1044.5 769.7L1045.5 777.5 M1054 777.5L1055.5 769.7L1058 769.7L1060 777.5 M1063 777.5L1065 769.7L1067.5 769.7L1069.5 777.5" fill="none" stroke="#fff" stroke-width="1"/>
<path d="M822.5 770v6" stroke="#00e000"/><path d="M847.5 770v7" stroke="#f060b0"/><path d="M848.5 770v7" stroke="#99ccff"/><path d="M860 769.5h3M863.5 770v5" stroke="#f060b0"/><path d="M908.5 770v7" stroke="#00e000"/><path d="M907.5 771v6" stroke="#f060b0"/><path d="M989.5 770v7" stroke="#ff0000"/><path d="M1040 769.5h4" stroke="#00e000" stroke-width="2"/>
<path d="M866.5 775v3M911.5 775v3M955.5 775v3M999.5 775v3M1044.5 775v3" stroke="#c8c8c8"/>
<g font-family="'DejaVu Sans','Liberation Sans',sans-serif" font-size="11.3" fill="#c8c8c8">
<text x="1091.5" y="547" textLength="13" lengthAdjust="spacingAndGlyphs">30</text>
<text x="1091.5" y="625" textLength="13" lengthAdjust="spacingAndGlyphs">20</text>
<text x="1091.5" y="704" textLength="13" lengthAdjust="spacingAndGlyphs">10</text>
<text x="821" y="793" textLength="13" lengthAdjust="spacingAndGlyphs">60</text>
<text x="865.3" y="793" textLength="13" lengthAdjust="spacingAndGlyphs">50</text>
<text x="909.7" y="793" textLength="13" lengthAdjust="spacingAndGlyphs">40</text>
<text x="953.3" y="793" textLength="13" lengthAdjust="spacingAndGlyphs">30</text>
<text x="997.4" y="793" textLength="13" lengthAdjust="spacingAndGlyphs">20</text>
<text x="1042.3" y="793" textLength="13" lengthAdjust="spacingAndGlyphs">10</text>
<text x="1088" y="793">0</text><text x="1100.3" y="793" textLength="18" lengthAdjust="spacingAndGlyphs">min</text>
</g></g>

</svg>
</body></html>
